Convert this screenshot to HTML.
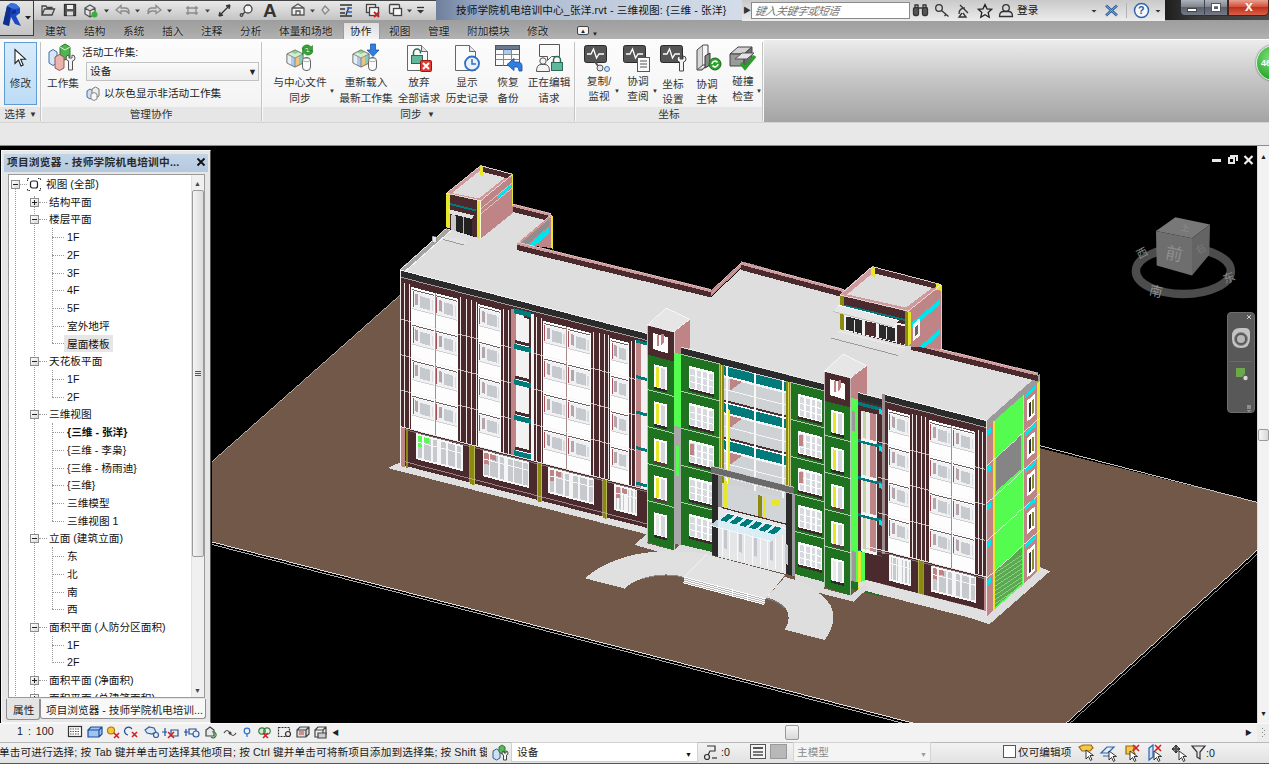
<!DOCTYPE html>
<html lang="zh">
<head>
<meta charset="utf-8">
<title>Revit</title>
<style>
*{box-sizing:border-box;margin:0;padding:0}
html,body{width:1269px;height:764px;overflow:hidden;background:#e6e6e6}
body{font-family:"Liberation Sans","Noto Sans CJK SC",sans-serif;font-size:10.67px;color:#1a1a1a;position:relative}
.abs{position:absolute}
.t{position:absolute;white-space:nowrap;line-height:14px;font-size:10.67px}
.c{text-align:center}
#titlebar{left:0;top:0;width:1269px;height:21px;background:linear-gradient(#e8e8e8,#d6d6d6 50%,#c2c2c2);border-top:1px solid #444}
#tabs{left:0;top:20px;width:1269px;height:19px;background:linear-gradient(#9e9e9e,#a6a6a6 50%,#b2b2b2)}
#ribbon{left:0;top:39px;width:764px;height:83px;background:linear-gradient(#fcfcfc,#f6f6f6 60%,#f0f0f0);border-top:1px solid #fff}
#ribbonR{left:764px;top:39px;width:505px;height:83px;background:linear-gradient(#ececec,#c4c4c4 50%,#a4a4a4);border-top:1px solid #fff}
#labels{left:0;top:106px;width:764px;height:16px;background:#e6e6e6;border-top:1px solid #f2f2f2}
#optbar{left:0;top:122px;width:1269px;height:24px;background:#e8e8e8;border-top:1px solid #d4d4d4;border-bottom:1px solid #8c8c8c}
.sep{position:absolute;top:42px;width:1px;height:79px;background:#c4c4c4;border-right:1px solid #fafafa;box-sizing:content-box}
.tab{position:absolute;top:24px;font-size:10.67px;line-height:14px;white-space:nowrap;color:#222;text-shadow:0 0 2px rgba(255,255,255,.55)}
.lbl{position:absolute;top:107px;font-size:10.67px;line-height:14px;white-space:nowrap;color:#333;text-align:center}
.btxt{position:absolute;font-size:10.67px;line-height:16px;white-space:nowrap;text-align:center;color:#333}
#view{left:0;top:146px;width:1257px;height:578px;background:#000;overflow:hidden}
#browser{left:1px;top:150px;width:210px;height:573px;background:#e6e6e6;border:1px solid #f6f6f6;border-right:1px solid #555}
#tree{left:8px;top:174px;width:197px;height:524px;background:#fff;border:1px solid #9a9a9a;overflow:hidden}
.row{position:absolute;white-space:nowrap;font-size:10.67px;line-height:14px;color:#111}
#vcb{left:0;top:723px;width:1269px;height:19px;background:#f0f0f0;border-top:1px solid #fafafa}
#status{left:0;top:742px;width:1269px;height:22px;background:linear-gradient(#f2f2f2,#e2e2e2);border-top:1px solid #b8b8b8;border-bottom:1px solid #555}
</style>
</head>
<body>
<div id="titlebar" class="abs"></div>
<!-- aero title region -->
<div class="abs" style="left:436px;top:0;width:306px;height:21px;background:linear-gradient(90deg,#6e7f9c 0%,#93a3bd 12%,#b4c1d5 40%,#c9d4e3 70%,#d3dce8 100%)"></div>
<div class="abs" style="left:1165px;top:0;width:104px;height:21px;background:linear-gradient(90deg,#1e1e1e,#3a3a3a 30%,#4a4a4a)"></div>
<div id="tabs" class="abs"></div>

<!-- App button -->
<div class="abs" style="left:0;top:0;width:34px;height:36px;background:linear-gradient(#e4e4e4,#c4c4c4);border-right:1px solid #3c3c3c;border-bottom:1px solid #3c3c3c;border-top:1px solid #333"></div>
<svg class="abs" style="left:0;top:0" width="34" height="36" viewBox="0 0 34 36">
 <path d="M7 6 L11 3 L16 4 L20 8 L20 13 L16 16 L21 26 L15 24 L11 17 L9 26 L3 24 Z" fill="#1b49c0"/>
 <path d="M7 6 L11 8 L9 26 L3 24 Z" fill="#0e2f8c"/>
 <path d="M11 3 L16 4 L20 8 L15 9 L11 8 L7 6 Z" fill="#3a6fe0"/>
 <path d="M12 10.500 L16 10 L16 13 L11.500 14.500 Z" fill="#0e2f8c"/>
 <path d="M25 16 l6 0 l-3 3.500z" fill="#222"/>
</svg>
<!-- QAT icons -->
<svg class="abs" style="left:38px;top:0" width="400" height="21" viewBox="38 0 400 21" fill="none" stroke="#444" stroke-width="1.3">
 <path d="M42 15 V6 h4 l1 1.5 h5 V9 M42 15 l2.5 -6 h10 l-2.5 6 z"/>
 <rect x="64.5" y="4.500" width="11" height="11" fill="#555" stroke="#333"/><rect x="67" y="5" width="6" height="4" fill="#eee" stroke="none"/><rect x="67" y="11.500" width="6" height="4" fill="#ddd" stroke="none"/>
 <path d="M85 8 l5 -3 l5 3 v6 l-5 3 l-5 -3 z M85 8 l5 3 l5 -3 M90 11 v6" stroke="#555" fill="#e4e4e4"/>
 <circle cx="94.500" cy="14.500" r="3" fill="#3cae3c" stroke="none"/>
 <path d="M104 9.500 l2.500 3 l2.500 -3z" fill="#333" stroke="none"/>
 <path d="M116 10 l5 -4.500 v2.500 h4 q4 0 4 4 v2 q-1 -3 -4 -3 h-4 v2.500 z" stroke="#8a8a8a"/>
 <path d="M135 9.500 l2.500 3 l2.500 -3z" fill="#444" stroke="none"/>
 <path d="M161 10 l-5 -4.500 v2.500 h-4 q-4 0 -4 4 v2 q1 -3 4 -3 h4 v2.500 z" stroke="#8a8a8a"/>
 <path d="M167 9.500 l2.500 3 l2.500 -3z" fill="#444" stroke="none"/>
 <path d="M186 8 h12 M186 13 h12 M188 6 v9 M196 6 v9" stroke="#8a8a8a"/>
 <path d="M205 9.500 l2.500 3 l2.500 -3z" fill="#444" stroke="none"/>
 <path d="M219 16 l11 -11 M219 16 l1 -4 M219 16 l4 -1 M230 5 l-4 1 M230 5 l-1 4" stroke="#333"/>
 <circle cx="248" cy="9" r="4" stroke="#444" fill="#f4f4f4"/><path d="M242 15 l3 -3" /><circle cx="241.500" cy="15" r="1.300"/>
 <path d="M576 0"/>
 <path d="M292 8 l6 -4 l6 4 v7 h-12 z M292 8 h12 M296 15 v-4 h4 v4" stroke="#555" fill="#f0f0f0"/>
 <path d="M310 9.500 l2.500 3 l2.500 -3z" fill="#444" stroke="none"/>
 <path d="M325 6 l4 4 l-4 4 l-3 -4z" stroke="#888" fill="#ddd"/>
 <path d="M340 5 h12 M340 9 h5 M340 13 h5 M340 16 h12 M349 7 l-3 8" stroke="#333"/><path d="M347 8 h5 M346 12 h6" stroke="#2a62c4"/>
 <rect x="366.500" y="4.500" width="9" height="8" stroke="#444" fill="#eee"/><rect x="369.500" y="7.500" width="9" height="8" stroke="#444" fill="#f4f4f4"/><path d="M374 12 l5 5 M379 12 l-5 5" stroke="#d02020" stroke-width="1.800"/>
 <rect x="389.500" y="4.500" width="10" height="9" rx="1" stroke="#444" fill="#eee"/><rect x="393.500" y="8.500" width="8" height="7" stroke="#444" fill="#fafafa"/>
 <path d="M407 9.500 l2.500 3 l2.500 -3z" fill="#444" stroke="none"/>
 <path d="M417 7.500 h7" stroke="#333"/><path d="M417 10 l3.500 3.500 l3.500 -3.500z" fill="#333" stroke="none"/>
</svg>
<div class="t" style="left:263px;top:0px;font-size:19px;line-height:21px;font-weight:bold;color:#333">A</div>
<!-- title text -->
<div class="t" style="left:456px;top:3px;font-size:10.67px;color:#111;letter-spacing:0.130px">技师学院机电培训中心_张洋.rvt - 三维视图: {三维 - 张洋}</div>
<!-- search box -->
<div class="abs" style="left:742px;top:0;width:423px;height:21px;background:linear-gradient(#c9c9c9,#dedede 60%,#ececec)"></div>
<div class="t" style="left:743px;top:4px;font-size:8px;color:#333">▶</div>
<div class="abs" style="left:751px;top:2px;width:159px;height:17px;background:#fff;border:1px solid #8a8a8a"></div>
<div class="t" style="left:755px;top:4px;font-size:11px;color:#777;font-style:italic;transform:skewX(-10deg);letter-spacing:-0.500px">键入关键字或短语</div>
<svg class="abs" style="left:910px;top:0" width="260" height="21" viewBox="910 0 260 21" fill="none" stroke="#333" stroke-width="1.300">
 <path d="M915 7 v-2 h3 v2 M923 7 v-2 h3 v2 M918 8 h5"/><rect x="913.500" y="7.500" width="5" height="8" rx="1.500" fill="#555"/><rect x="922.500" y="7.500" width="5" height="8" rx="1.500" fill="#555"/>
 <circle cx="939" cy="8" r="3.300"/><path d="M941.500 10.500 l7 6 M946 14.500 l-1.500 1.500"/>
 <path d="M960 5 l8 8 M959 14 q0 -6 6 -6 M962 13 l-3 4 h7 l-3 -4" />
 <path d="M985 4.500 l2 4.300 l4.700 0.500 l-3.500 3.200 l1 4.700 l-4.200 -2.400 l-4.200 2.400 l1 -4.700 l-3.500 -3.200 l4.700 -0.500 z" stroke="#222"/>
 <circle cx="1006" cy="8" r="3.300"/><path d="M999.500 16.500 q0 -5 4 -5 h5 q4 0 4 5 z"/>
 <path d="M1091.500 10 l2.500 2.500 l2.500 -2.500z" fill="#333" stroke="none"/>
 <path d="M1106 5.500 l11 10 M1117 5.500 l-11 10" stroke="#2d5d9a" stroke-width="2.600"/>
 <path d="M1106 5.500 l11 10 M1117 5.500 l-11 10" stroke="#9ebbe0" stroke-width="0.800"/>
 <circle cx="1141.500" cy="10.500" r="7" stroke="#3463ab" fill="#f4f7fc" stroke-width="1.500"/>
 <path d="M1155.500 10 l2.500 2.500 l2.500 -2.500z" fill="#333" stroke="none"/>
 <path d="M1126.500 3 v15" stroke="#b4b4b4" stroke-width="1"/>
</svg>
<div class="t" style="left:1017px;top:3px;font-size:10.67px;color:#111">登录</div>
<div class="t" style="left:1138px;top:3px;font-size:10.67px;font-weight:bold;color:#2b59a3">?</div>
<!-- window controls -->
<div class="abs" style="left:1180px;top:0;width:48px;height:16px;background:linear-gradient(#aeb2ba,#80858f 45%,#5c616b 50%,#747a86);border:1px solid #2c2f36;border-top:none;border-radius:0 0 0 5px"></div>
<div class="abs" style="left:1204px;top:0;width:1px;height:16px;background:#3b4557"></div>
<div class="abs" style="left:1228px;top:0;width:41px;height:16px;background:linear-gradient(#e8a090,#d4503c 45%,#c0301c 50%,#d86048);border:1px solid #4a2018;border-top:none;border-radius:0 0 5px 0"></div>
<div class="abs" style="left:1187px;top:8px;width:10px;height:4px;background:#fff;border:1px solid #444"></div>
<div class="abs" style="left:1212px;top:4px;width:8px;height:7px;border:2px solid #fff;outline:1px solid #555"></div>
<div class="t" style="left:1245px;top:-1px;font-size:14px;font-weight:bold;color:#fff;line-height:15px">x</div>

<!-- tabs -->
<div class="abs" style="left:343px;top:22px;width:37px;height:18px;background:linear-gradient(#dedede,#f4f4f4);border:1px solid #9c9c9c;border-bottom:none;border-radius:2px 2px 0 0"></div>
<div class="tab" style="left:45px">建筑</div>
<div class="tab" style="left:84px">结构</div>
<div class="tab" style="left:123px">系统</div>
<div class="tab" style="left:162px">插入</div>
<div class="tab" style="left:201px">注释</div>
<div class="tab" style="left:240px">分析</div>
<div class="tab" style="left:279px">体量和场地</div>
<div class="tab" style="left:350px">协作</div>
<div class="tab" style="left:389px">视图</div>
<div class="tab" style="left:428px">管理</div>
<div class="tab" style="left:467px">附加模块</div>
<div class="tab" style="left:527px">修改</div>
<div class="abs" style="left:577px;top:26px;width:12px;height:9px;border:1px solid #444;border-radius:2px;background:#f4f4f4"></div>
<div class="t" style="left:580px;top:24px;font-size:6px;color:#222">▲</div>
<div class="t" style="left:592px;top:27px;font-size:6px;color:#222">▼</div>

<div id="ribbon" class="abs"></div>
<div id="ribbonR" class="abs"></div>
<div id="labels" class="abs"></div>
<div id="optbar" class="abs"></div>
<div class="sep" style="left:40px"></div>
<div class="sep" style="left:261px"></div>
<div class="sep" style="left:574px"></div>
<div class="sep" style="left:762px"></div>

<!-- Modify button -->
<div class="abs" style="left:4px;top:42px;width:33px;height:63px;background:linear-gradient(#d9ebfb,#bcdcf6);border:1px solid #5e9bd2"></div>
<svg class="abs" style="left:12px;top:48px" width="16" height="20" viewBox="0 0 16 20"><path d="M3 1.500 v14 l3.500 -3.500 l2.500 6 l2.200 -1 l-2.500 -5.800 h4.800 z" fill="#fff" stroke="#222" stroke-width="1.100"/></svg>
<div class="btxt" style="left:4px;top:75px;width:33px">修改</div>
<div class="lbl" style="left:3px;width:24px">选择</div>
<div class="t" style="left:29px;top:108px;font-size:8px;color:#333">▼</div>

<!-- worksets panel -->
<svg class="abs" style="left:46px;top:42px" width="34" height="32" viewBox="0 0 34 32">
 <path d="M3 10 l4 -2.500 l4 2.500 v11 l-4 2.500 l-4 -2.500z" fill="#d6e6f6" stroke="#3a6ea8"/>
 <path d="M14 5 l5 -3 l5 3 v10 l-5 3 l-5 -3z" fill="#4fb54f" stroke="#2a7a2a"/><path d="M14 5 l5 3 l5 -3" fill="none" stroke="#d8f0d8"/>
 <path d="M9 15 l4.500 -2.500 l4.500 2.500 v11 l-4.500 2.500 l-4.500 -2.500z" fill="#e8b4b0" stroke="#a05050"/>
 <path d="M20 16 q0 -3 3 -3 v3 h3 v-3 q3 0 3 3 q0 2.500 -2.500 3 v9 h-4 v-9 q-2.500 -0.500 -2.500 -3z" fill="#f2f2f2" stroke="#555"/>
</svg>
<div class="btxt" style="left:44px;top:75px;width:38px">工作集</div>
<div class="t" style="left:82px;top:45px">活动工作集:</div>
<div class="abs" style="left:86px;top:62px;width:173px;height:19px;background:linear-gradient(#fafafa,#ececec);border:1px solid #c2c2c2"></div>
<div class="t" style="left:90px;top:64px">设备</div>
<div class="t" style="left:248px;top:65px;font-size:9px;color:#222">▼</div>
<svg class="abs" style="left:85px;top:85px" width="17" height="17" viewBox="0 0 17 17">
 <path d="M2 6 l3 -2 l3 2 v6 l-3 2 l-3 -2z" fill="#cfe0f2" stroke="#3f6fa6"/>
 <path d="M7 4 l3.500 -2 l3.500 2 v7 l-3.500 2 l-3.500 -2z" fill="#eee" stroke="#777"/>
 <path d="M6 9 l3 -1.500 l3 1.500 v5 l-3 1.500 l-3 -1.500z" fill="#f8f8f8" stroke="#888"/>
</svg>
<div class="t" style="left:104px;top:86px">以灰色显示非活动工作集</div>
<div class="lbl" style="left:101px;width:100px">管理协作</div>
<!-- sync panel -->
<svg class="abs" style="left:284px;top:42px" width="32" height="32" viewBox="0 0 32 32">
 <path d="M3 12 l8 -4 l8 4 v9 l-8 4 l-8 -4z" fill="#f4f4f4" stroke="#777" stroke-width="0.8"/>
 <path d="M3 12 l8 4 v9 l-8 -4z" fill="#a9cbee"/><path d="M3 12 l4 2 v9 l-4 -2z" fill="#e8eef6"/>
 <path d="M11 16 l8 -4 v9 l-8 4z" fill="#f0c27a"/><path d="M15 14 l4 -2 v9 l-4 2z" fill="#7ccfc0"/>
 <path d="M3 12 l8 -4 l8 4 l-8 4z" fill="#d4ecd0"/><path d="M7 10 l4 -2 l4 2 l-4 2z" fill="#8fd08a"/>
 <path d="M3 12 l8 -4 l8 4 v9 l-8 4 l-8 -4z M3 12 l8 4 l8 -4 M11 16 v9" fill="none" stroke="#6a6a6a" stroke-width="0.7"/>
 <rect x="18.500" y="15.500" width="8" height="13" rx="3.500" fill="#fafafa" stroke="#666"/><ellipse cx="22.500" cy="18" rx="3.800" ry="1.600" fill="#fff" stroke="#888" stroke-width="0.700"/>
 <path d="M18 7 a5 5 0 0 1 9 -2 l1.500 -1.500 v5 h-5 l1.500 -1.500 a3 3 0 0 0 -5 0.500z M29 9 a5 5 0 0 1 -9 2 l-1.500 1.500 v-5 h5 l-1.700 1.700 a3 3 0 0 0 5 -1z" fill="#34a834" stroke="#146a14" stroke-width="0.500"/>
</svg>
<div class="btxt" style="left:270px;top:74px;width:60px">与中心文件</div>
<div class="btxt" style="left:270px;top:90px;width:60px">同步</div>
<div class="t" style="left:329px;top:84px;font-size:6px;color:#333">▼</div>

<svg class="abs" style="left:350px;top:42px" width="32" height="32" viewBox="0 0 32 32">
 <path d="M3 12 l8 -4 l8 4 v9 l-8 4 l-8 -4z" fill="#f4f4f4" stroke="#777" stroke-width="0.8"/>
 <path d="M3 12 l8 4 v9 l-8 -4z" fill="#a9cbee"/><path d="M3 12 l4 2 v9 l-4 -2z" fill="#e8eef6"/>
 <path d="M11 16 l8 -4 v9 l-8 4z" fill="#f0c27a"/><path d="M15 14 l4 -2 v9 l-4 2z" fill="#7ccfc0"/>
 <path d="M3 12 l8 -4 l8 4 l-8 4z" fill="#d4ecd0"/><path d="M7 10 l4 -2 l4 2 l-4 2z" fill="#8fd08a"/>
 <path d="M3 12 l8 -4 l8 4 v9 l-8 4 l-8 -4z M3 12 l8 4 l8 -4 M11 16 v9" fill="none" stroke="#6a6a6a" stroke-width="0.7"/>
 <rect x="18.500" y="15.500" width="8" height="13" rx="3.500" fill="#fafafa" stroke="#666"/><ellipse cx="22.500" cy="18" rx="3.800" ry="1.600" fill="#fff" stroke="#888" stroke-width="0.700"/>
 <path d="M20.500 2 h5 v6 h3.500 l-6 6.500 l-6 -6.500 h3.500z" fill="#2f7fe0" stroke="#164a9a" stroke-width="0.700"/>
</svg>
<div class="btxt" style="left:336px;top:74px;width:60px">重新载入</div>
<div class="btxt" style="left:336px;top:90px;width:60px">最新工作集</div>

<svg class="abs" style="left:403px;top:42px" width="32" height="32" viewBox="0 0 32 32">
 <path d="M4.500 3.500 h14 l6 6 v19 h-20z" fill="#fbfbfb" stroke="#666"/><path d="M18.500 3.500 v6 h6" fill="#e4e4e4" stroke="#666"/>
 <rect x="8.500" y="13.500" width="11" height="8" fill="#5fb89c" stroke="#2c6a58"/><path d="M10.500 13.500 v-3 a3.500 3.500 0 0 1 7 0 v1" fill="none" stroke="#2c6a58" stroke-width="1.500"/>
 <rect x="17.500" y="18.500" width="11" height="11" rx="1" fill="#e23a30" stroke="#9a1812"/><path d="M20 21 l6 6 M26 21 l-6 6" stroke="#fff" stroke-width="2"/>
</svg>
<div class="btxt" style="left:389px;top:74px;width:60px">放弃</div>
<div class="btxt" style="left:389px;top:90px;width:60px">全部请求</div>

<svg class="abs" style="left:451px;top:42px" width="32" height="32" viewBox="0 0 32 32">
 <path d="M4.500 3.500 h14 l6 6 v19 h-20z" fill="#fbfbfb" stroke="#666"/><path d="M18.500 3.500 v6 h6" fill="#e4e4e4" stroke="#666"/>
 <circle cx="21" cy="21.500" r="7" fill="#e8f1fb" stroke="#2f6fc0" stroke-width="1.800"/><path d="M21 17 v5 h4" fill="none" stroke="#2f6fc0" stroke-width="1.500"/>
</svg>
<div class="btxt" style="left:437px;top:74px;width:60px">显示</div>
<div class="btxt" style="left:437px;top:90px;width:60px">历史记录</div>

<svg class="abs" style="left:493px;top:42px" width="32" height="32" viewBox="0 0 32 32">
 <rect x="2.500" y="3.500" width="24" height="20" fill="#fdfdfd" stroke="#555"/><rect x="2.500" y="3.500" width="24" height="4" fill="#6a7a8c" stroke="#555"/>
 <path d="M2.500 12.500 h24 M2.500 17.500 h24 M10.500 7.500 v16 M18.500 7.500 v16" stroke="#888" fill="none"/>
 <rect x="11" y="8" width="7" height="4" fill="#a9cdf0"/>
 <path d="M29 29 v-5 q0 -4 -5 -4 h-3 v-3.500 l-7 6 l7 6 v-3.500 h3 q2 0 2 4z" fill="#2f7fe0" stroke="#164a9a" stroke-width="0.800"/>
</svg>
<div class="btxt" style="left:478px;top:74px;width:60px">恢复</div>
<div class="btxt" style="left:478px;top:90px;width:60px">备份</div>

<svg class="abs" style="left:534px;top:42px" width="32" height="32" viewBox="0 0 32 32">
 <path d="M5.500 2.500 h20 v12 h-8 l-4 4 v-4 h-8z" fill="#fafafa" stroke="#555"/>
 <circle cx="9" cy="19" r="3.200" fill="#f4f4f4" stroke="#555"/><path d="M2.500 29.500 q0 -7 4.500 -7 h4 q4.500 0 4.500 7z" fill="#f4f4f4" stroke="#555"/>
 <rect x="17.500" y="20.500" width="11" height="8" fill="#5fb89c" stroke="#2c6a58"/><path d="M19.500 20.500 v-2.500 a3.500 3.500 0 0 1 7 0 v2.500" fill="none" stroke="#2c6a58" stroke-width="1.500"/>
</svg>
<div class="btxt" style="left:519px;top:74px;width:60px">正在编辑</div>
<div class="btxt" style="left:519px;top:90px;width:60px">请求</div>
<div class="lbl" style="left:391px;width:40px">同步</div>
<div class="t" style="left:427px;top:108px;font-size:8px;color:#333">▼</div>

<!-- coordinate panel -->
<svg class="abs" style="left:582px;top:42px" width="32" height="32" viewBox="0 0 32 32">
 <rect x="2.500" y="3.500" width="22" height="17" rx="2" fill="#555" stroke="#2a2a2a"/><path d="M5 12 h4 l2.500 -5 l3 9 l2.500 -4 h5" fill="none" stroke="#fff" stroke-width="1.300"/>
 <path d="M13 20 l4 5" stroke="#555" stroke-width="2"/><circle cx="18" cy="26" r="3" fill="#e8e8e8" stroke="#555"/><circle cx="25" cy="27" r="2.500" fill="#cfe4f8" stroke="#3a78c0"/>
</svg>
<div class="btxt" style="left:569px;top:73px;width:60px">复制/</div>
<div class="btxt" style="left:569px;top:88px;width:60px">监视</div>
<div class="t" style="left:614px;top:84px;font-size:6px;color:#333">▼</div>

<svg class="abs" style="left:621px;top:42px" width="32" height="32" viewBox="0 0 32 32">
 <rect x="2.500" y="3.500" width="22" height="17" rx="2" fill="#555" stroke="#2a2a2a"/><path d="M5 12 h4 l2.500 -5 l3 9 l2.500 -4 h5" fill="none" stroke="#fff" stroke-width="1.300"/>
 <rect x="16.500" y="15.500" width="12" height="14" fill="#fafafa" stroke="#555"/><path d="M19 19 h7 M19 22 h7 M19 25 h7" stroke="#555"/>
</svg>
<div class="btxt" style="left:608px;top:73px;width:60px">协调</div>
<div class="btxt" style="left:608px;top:88px;width:60px">查阅</div>
<div class="t" style="left:652px;top:84px;font-size:6px;color:#333">▼</div>

<svg class="abs" style="left:658px;top:42px" width="32" height="32" viewBox="0 0 32 32">
 <rect x="2.500" y="3.500" width="22" height="17" rx="2" fill="#555" stroke="#2a2a2a"/><path d="M5 12 h4 l2.500 -5 l3 9 l2.500 -4 h5" fill="none" stroke="#fff" stroke-width="1.300"/>
 <path d="M19 17 q0 -3 3 -3 v3 h3 v-3 q3 0 3 3 q0 2.500 -2.500 3 v9 h-4 v-9 q-2.500 -0.500 -2.500 -3z" fill="#f2f2f2" stroke="#444"/>
</svg>
<div class="btxt" style="left:643px;top:76px;width:60px">坐标</div>
<div class="btxt" style="left:643px;top:91px;width:60px">设置</div>

<svg class="abs" style="left:692px;top:42px" width="32" height="32" viewBox="0 0 32 32">
 <path d="M5 8 l6 -5 v20 l-6 5z" fill="#d8d8d8" stroke="#444"/><path d="M11 3 h5 v20 h-5" fill="#f4f4f4" stroke="#444"/><path d="M5 28 h5 l6 -5" fill="#bbb" stroke="#444"/>
 <path d="M13 14 l5 -3 v12 l-5 3z" fill="#888" stroke="#333"/>
 <circle cx="23" cy="22" r="6" fill="#2fa12f" stroke="#146a14"/><path d="M20 22 a3 3 0 0 1 5.500 -1.500 M26 22 a3 3 0 0 1 -5.500 1.500" stroke="#fff" fill="none" stroke-width="1.500"/>
</svg>
<div class="btxt" style="left:677px;top:76px;width:60px">协调</div>
<div class="btxt" style="left:677px;top:91px;width:60px">主体</div>

<svg class="abs" style="left:727px;top:42px" width="32" height="32" viewBox="0 0 32 32">
 <path d="M3 12 l8 -7 h14 l-8 7z" fill="#d4d4d4" stroke="#444"/><path d="M3 12 h14 v12 h-14z" fill="#9a9a9a" stroke="#444"/><path d="M17 12 l8 -7 v12 l-8 7z" fill="#6e6e6e" stroke="#444"/>
 <path d="M8 17 l7 -6 h12 l-7 6z" fill="#e4e4e4" stroke="#555"/>
 <path d="M14 21 l4 5 l10 -12" fill="none" stroke="#2aa02a" stroke-width="3.500"/>
</svg>
<div class="btxt" style="left:713px;top:73px;width:60px">碰撞</div>
<div class="btxt" style="left:713px;top:88px;width:60px">检查</div>
<div class="t" style="left:756px;top:84px;font-size:6px;color:#333">▼</div>
<div class="lbl" style="left:649px;width:40px">坐标</div>

<!-- green circle -->
<div class="abs" style="left:1256px;top:45px;width:36px;height:36px;border-radius:50%;background:radial-gradient(circle at 40% 35%,#7ee07e,#28a428 70%);border:1px solid #d8f4d8;box-shadow:0 0 2px #444"></div>
<div class="t" style="left:1261px;top:56px;font-size:9px;font-weight:bold;color:#fff">46</div>

<div id="view" class="abs">
<svg class="abs" style="left:0;top:0" width="1257" height="578" viewBox="0 146 1257 578" shape-rendering="crispEdges">
<polygon points="212.0,461.6 406.0,290.0 1257.0,502.3 1257.0,550.5 1065.2,724.0 916.7,724.0 212.0,542.0" fill="#715848"/>
<polyline points="212.0,542.0 916.7,724.0" fill="none" stroke="#f0f0f0" stroke-width="0.9"/>
<polyline points="212.0,544.5 906.0,724.0" fill="none" stroke="#d8d8d8" stroke-width="0.8"/>
<polyline points="1065.2,724.0 1257.0,550.5" fill="none" stroke="#e8e8e8" stroke-width="0.9"/>
<polyline points="1069.2,724.0 1257.0,554.5" fill="none" stroke="#cfcfcf" stroke-width="0.7"/>
<polyline points="1039.0,445.5 1257.0,502.3" fill="none" stroke="#f0f0f0" stroke-width="0.8"/>
<polyline points="212.0,461.6 400.0,295.2" fill="none" stroke="#e8e0d8" stroke-width="0.7"/>
<polygon points="973.0,618.7 989.3,624.4 1050.0,571.3 1040.0,567.0" fill="#dedede"/>
<polygon points="986.5,420.6 1039.6,373.6 1039.6,569.6 986.5,616.6" fill="#bf8486"/>
<polygon points="994.0,421.0 1022.5,395.7 1022.5,584.7 994.0,610.0" fill="#55fc50"/>
<polygon points="986.5,427.6 993.0,421.8 993.0,610.8 986.5,616.6" fill="#bf8486"/>
<polygon points="993.0,421.8 994.5,420.5 994.5,609.5 993.0,610.8" fill="#e6e62a"/>
<polygon points="1022.5,395.7 1024.4,394.1 1024.4,583.1 1022.5,584.7" fill="#e6e62a"/>
<polygon points="1024.4,394.1 1036.8,383.1 1036.8,572.1 1024.4,583.1" fill="#bf8486"/>
<polygon points="1036.8,376.1 1039.6,373.6 1039.6,569.6 1036.8,572.1" fill="#e6e62a"/>
<polygon points="996.0,457.2 1021.0,435.1 1021.0,469.1 996.0,491.2" fill="#858585"/>
<polygon points="995.0,571.1 1022.0,547.2 1022.0,583.2 995.0,607.1" fill="#5aa850"/>
<polyline points="995.0,573.1 1022.0,555.2" fill="none" stroke="#9ad890" stroke-width="0.8"/>
<polyline points="995.0,577.5 1022.0,559.6" fill="none" stroke="#9ad890" stroke-width="0.8"/>
<polyline points="995.0,581.9 1022.0,564.0" fill="none" stroke="#9ad890" stroke-width="0.8"/>
<polyline points="995.0,586.3 1022.0,568.4" fill="none" stroke="#9ad890" stroke-width="0.8"/>
<polyline points="995.0,590.7 1022.0,572.8" fill="none" stroke="#9ad890" stroke-width="0.8"/>
<polyline points="995.0,595.1 1022.0,577.2" fill="none" stroke="#9ad890" stroke-width="0.8"/>
<polyline points="995.0,599.5 1022.0,581.6" fill="none" stroke="#9ad890" stroke-width="0.8"/>
<polyline points="995.0,603.9 1022.0,586.0" fill="none" stroke="#9ad890" stroke-width="0.8"/>
<polygon points="987.0,430.2 991.0,426.6 991.0,432.6 987.0,436.2" fill="#00e4ee"/>
<polygon points="1025.0,394.5 1036.0,384.8 1036.0,388.8 1025.0,398.5" fill="#00e4ee"/>
<polygon points="1027.0,400.8 1035.0,393.7 1035.0,414.7 1027.0,421.8" fill="#fdfdfd"/>
<polygon points="1029.0,403.0 1031.0,401.2 1031.0,415.2 1029.0,417.0" fill="#333"/>
<polygon points="1032.0,400.3 1033.5,399.0 1033.5,413.0 1032.0,414.3" fill="#8a8a30"/>
<polyline points="986.5,465.1 1039.6,418.1" fill="none" stroke="#f4f4f4" stroke-width="0.8"/>
<polygon points="987.0,467.7 991.0,464.1 991.0,470.1 987.0,473.7" fill="#00e4ee"/>
<polygon points="1025.0,432.0 1036.0,422.3 1036.0,426.3 1025.0,436.0" fill="#00e4ee"/>
<polygon points="1027.0,438.3 1035.0,431.2 1035.0,452.2 1027.0,459.3" fill="#fdfdfd"/>
<polygon points="1029.0,440.5 1031.0,438.7 1031.0,452.7 1029.0,454.5" fill="#333"/>
<polygon points="1032.0,437.8 1033.5,436.5 1033.5,450.5 1032.0,451.8" fill="#8a8a30"/>
<polyline points="986.5,502.6 1039.6,455.6" fill="none" stroke="#f4f4f4" stroke-width="0.8"/>
<polygon points="987.0,505.2 991.0,501.6 991.0,507.6 987.0,511.2" fill="#00e4ee"/>
<polygon points="1025.0,469.5 1036.0,459.8 1036.0,463.8 1025.0,473.5" fill="#00e4ee"/>
<polygon points="1027.0,475.8 1035.0,468.7 1035.0,489.7 1027.0,496.8" fill="#fdfdfd"/>
<polygon points="1029.0,478.0 1031.0,476.2 1031.0,490.2 1029.0,492.0" fill="#333"/>
<polygon points="1032.0,475.3 1033.5,474.0 1033.5,488.0 1032.0,489.3" fill="#8a8a30"/>
<polyline points="986.5,540.1 1039.6,493.1" fill="none" stroke="#f4f4f4" stroke-width="0.8"/>
<polygon points="987.0,542.7 991.0,539.1 991.0,545.1 987.0,548.7" fill="#00e4ee"/>
<polygon points="1025.0,507.0 1036.0,497.3 1036.0,501.3 1025.0,511.0" fill="#00e4ee"/>
<polygon points="1027.0,513.3 1035.0,506.2 1035.0,527.2 1027.0,534.3" fill="#fdfdfd"/>
<polygon points="1029.0,515.5 1031.0,513.7 1031.0,527.7 1029.0,529.5" fill="#333"/>
<polygon points="1032.0,512.8 1033.5,511.5 1033.5,525.5 1032.0,526.8" fill="#8a8a30"/>
<polyline points="986.5,577.6 1039.6,530.6" fill="none" stroke="#f4f4f4" stroke-width="0.8"/>
<polygon points="987.0,580.2 991.0,576.6 991.0,582.6 987.0,586.2" fill="#00e4ee"/>
<polygon points="1025.0,544.5 1036.0,534.8 1036.0,538.8 1025.0,548.5" fill="#00e4ee"/>
<polygon points="1027.0,550.8 1035.0,543.7 1035.0,570.7 1027.0,577.8" fill="#fdfdfd"/>
<polygon points="1029.0,553.0 1031.0,551.2 1031.0,571.2 1029.0,573.0" fill="#333"/>
<polygon points="1032.0,550.3 1033.5,549.0 1033.5,569.0 1032.0,570.3" fill="#8a8a30"/>
<polygon points="986.5,420.6 1040.0,373.3 1040.0,380.3 986.5,427.6" fill="#9a9a9a"/>
<polyline points="986.5,420.6 986.5,616.0" fill="none" stroke="#f4f4f4" stroke-width="0.8"/>
<polygon points="400.0,270.0 446.4,228.3 480.6,238.7 512.0,211.0 550.8,221.0 516.6,249.5 711.0,297.0 740.5,269.4 843.9,297.0 872.2,272.6 941.4,290.0 941.4,349.0 1038.2,375.0 986.5,420.6 884.9,395.4 882.0,399.5 857.7,392.4 850.8,377.0 824.2,371.3 824.2,389.0 680.6,352.0 674.0,330.8 647.4,325.1 647.4,333.4" fill="#dedede"/>
<polygon points="399.0,270.0 446.4,228.3 450.5,231.0 404.0,272.3" fill="#a4a4a4"/>
<polyline points="404.0,272.3 450.5,231.0" fill="none" stroke="#f4f4f4" stroke-width="1"/>
<polyline points="400.0,270.0 446.4,228.3" fill="none" stroke="#fff" stroke-width="0.8"/>
<polygon points="512.8,205.5 550.8,215.0 550.8,221.5 512.8,212.0" fill="#4a2a2c"/>
<polygon points="512.8,203.9 550.8,213.4 550.8,216.2 512.8,206.7" fill="#cf9a9c"/>
<polyline points="512.8,203.9 550.8,213.4" fill="none" stroke="#f6e8e8" stroke-width="0.6"/>
<polygon points="550.8,215.0 550.8,248.0 528.0,245.0 520.0,240.0" fill="#bf8486"/>
<polygon points="550.8,215.0 552.5,216.0 552.5,249.0 550.8,248.0" fill="#e6e62a"/>
<polygon points="548.5,219.0 519.0,245.0 524.0,247.0 548.5,226.0" fill="#8e8e8e"/>
<polygon points="548.5,227.0 527.0,246.0 533.0,247.5 548.5,234.0" fill="#00e4ee"/>
<polygon points="550.8,215.0 516.6,243.5 516.6,247.0 550.8,218.5" fill="#bf8486"/>
<polyline points="550.8,215.0 516.6,243.5" fill="none" stroke="#f6e8e8" stroke-width="0.7"/>
<polyline points="550.8,216.8 516.6,245.2" fill="none" stroke="#e8c8c8" stroke-width="0.5"/>
<polygon points="516.6,243.5 711.0,291.0 711.0,297.5 516.6,250.0" fill="#4a2a2c"/>
<polygon points="516.6,241.9 711.0,289.4 711.0,292.2 516.6,244.7" fill="#cf9a9c"/>
<polyline points="516.6,241.9 711.0,289.4" fill="none" stroke="#f6e8e8" stroke-width="0.6"/>
<polygon points="711.0,291.0 740.5,263.4 740.5,268.4 711.0,296.0" fill="#bf8486"/>
<polyline points="711.0,291.0 740.5,263.4" fill="none" stroke="#f6e8e8" stroke-width="0.7"/>
<polyline points="711.0,293.5 740.5,265.9" fill="none" stroke="#e8c8c8" stroke-width="0.5"/>
<polygon points="740.5,263.4 843.9,291.0 843.9,297.5 740.5,269.9" fill="#4a2a2c"/>
<polygon points="740.5,261.8 843.9,289.4 843.9,292.2 740.5,264.6" fill="#cf9a9c"/>
<polyline points="740.5,261.8 843.9,289.4" fill="none" stroke="#f6e8e8" stroke-width="0.6"/>
<polygon points="843.9,291.0 872.2,266.6 872.2,271.6 843.9,296.0" fill="#bf8486"/>
<polyline points="843.9,291.0 872.2,266.6" fill="none" stroke="#f6e8e8" stroke-width="0.7"/>
<polyline points="843.9,293.5 872.2,269.1" fill="none" stroke="#e8c8c8" stroke-width="0.5"/>
<polygon points="911.0,343.4 1038.2,374.7 1038.2,381.2 911.0,349.9" fill="#4a2a2c"/>
<polygon points="911.0,341.8 1038.2,373.1 1038.2,375.9 911.0,344.6" fill="#cf9a9c"/>
<polyline points="911.0,341.8 1038.2,373.1" fill="none" stroke="#f6e8e8" stroke-width="0.6"/>
<polygon points="480.6,200.8 512.8,174.2 512.8,213.1 480.6,238.7" fill="#bf8486"/>
<polyline points="480.6,209.0 512.8,182.5" fill="none" stroke="#f0dada" stroke-width="0.7"/>
<polyline points="480.6,214.0 512.8,187.5" fill="none" stroke="#f0dada" stroke-width="0.7"/>
<polygon points="497.0,196.0 512.0,183.5 512.0,187.0 497.0,199.5" fill="#00e4ee"/>
<polygon points="446.4,193.2 480.6,200.8 480.6,238.7 446.4,227.4" fill="#4a2a2c"/>
<polygon points="446.4,193.2 449.5,194.0 449.5,228.4 446.4,227.4" fill="#e6e62a"/>
<polygon points="477.0,200.0 480.6,200.8 480.6,238.7 477.0,237.5" fill="#e6e62a"/>
<polygon points="450.0,203.0 476.0,209.5 476.0,211.5 450.0,205.0" fill="#007a7a"/>
<polygon points="448.0,209.0 474.0,215.5 471.0,219.5 450.0,214.0" fill="#e0e0e0"/>
<polygon points="455.5,215.0 471.5,219.0 471.5,235.5 455.5,231.0" fill="#222"/>
<polyline points="463.5,217.0 463.5,233.0" fill="none" stroke="#ddd" stroke-width="0.8"/>
<polygon points="451.0,214.5 455.5,215.6 455.5,231.0 451.0,229.8" fill="#c9c9c9"/>
<polygon points="446.4,193.2 480.6,165.7 512.8,174.2 480.6,200.8" fill="#cf9a9c"/>
<polygon points="452.0,193.0 481.5,169.5 507.0,176.0 479.0,198.5" fill="#dedede"/>
<polygon points="481.5,166.5 511.0,174.2 507.5,178.3 481.5,171.5" fill="#4a2a2c"/>
<polygon points="480.0,166.0 483.0,166.8 483.0,176.0 480.0,175.0" fill="#e6e62a"/>
<polyline points="446.4,193.2 480.6,165.7 512.8,174.2 480.6,200.8 446.4,193.2" fill="none" stroke="#f8ecec" stroke-width="0.8"/>
<polyline points="480.6,200.8 480.6,238.7" fill="none" stroke="#fff" stroke-width="0.8"/>
<polyline points="512.8,174.2 512.8,206.0" fill="none" stroke="#e6e62a" stroke-width="1.2"/>
<polygon points="447.0,236.0 468.0,241.5 464.0,245.0 443.0,239.5" fill="#e2e2e2"/>
<polyline points="443.0,239.5 464.0,245.0" fill="none" stroke="#8a8a8a" stroke-width="0.8"/>
<polygon points="432.0,236.0 436.0,237.0 436.0,243.0 432.0,242.0" fill="#e8e8e8" stroke="#888" stroke-width="0.6"/>
<polygon points="908.2,311.2 941.4,284.6 941.4,349.1 908.2,346.3" fill="#bf8486"/>
<polygon points="912.0,322.5 940.0,299.0 940.0,304.5 912.0,328.5" fill="#00e4ee"/>
<polygon points="919.0,347.0 940.0,329.0 940.0,334.0 925.0,347.5" fill="#00e4ee"/>
<polygon points="913.0,324.0 919.5,318.5 919.5,336.0 913.0,341.0" fill="#f4f4f4"/>
<polygon points="915.0,327.0 917.5,325.0 917.5,334.0 915.0,336.0" fill="#666"/>
<polygon points="839.9,295.0 908.2,311.2 908.2,346.3 839.9,329.2" fill="#4a2a2c"/>
<polygon points="839.9,295.0 843.5,295.9 843.5,330.2 839.9,329.2" fill="#8a8a10"/>
<polygon points="904.5,310.3 908.2,311.2 908.2,346.3 904.5,345.4" fill="#8a8a10"/>
<polygon points="908.2,311.2 911.0,311.9 911.0,343.5 908.2,346.3" fill="#e6e62a"/>
<polygon points="843.5,304.4 904.5,318.8 904.5,320.8 843.5,306.4" fill="#007a7a"/>
<polygon points="843.5,309.9 904.5,324.3 904.5,344.5 843.5,330.1" fill="#f2f2f2"/>
<polygon points="846.0,316.4 862.0,320.2 862.0,333.7 846.0,329.9" fill="#2a2a2a"/>
<polygon points="853.5,319.2 854.5,319.5 854.5,331.5 853.5,331.2" fill="#e8e8e8"/>
<polygon points="864.5,320.8 876.0,323.6 876.0,337.1 864.5,334.3" fill="#4a2a2c"/>
<polygon points="878.5,324.2 895.0,328.1 895.0,341.6 878.5,337.7" fill="#2a2a2a"/>
<polygon points="886.3,327.0 887.3,327.2 887.3,339.2 886.3,339.0" fill="#e8e8e8"/>
<polygon points="897.0,324.5 904.5,326.3 904.5,344.3 897.0,342.5" fill="#4a2a2c"/>
<polygon points="838.0,305.0 899.0,320.5 893.0,327.0 833.0,311.5" fill="#e6e6e6"/>
<polyline points="838.0,305.0 899.0,320.5" fill="none" stroke="#fafafa" stroke-width="1"/>
<polyline points="833.0,311.5 893.0,327.0" fill="none" stroke="#c0c0c0" stroke-width="1"/>
<polygon points="839.9,295.0 872.2,266.6 941.4,284.6 908.2,311.2" fill="#cf9a9c"/>
<polygon points="847.0,294.5 874.5,271.5 934.0,286.5 906.0,307.5" fill="#dedede"/>
<polygon points="874.5,267.5 938.5,284.2 934.5,288.3 874.5,273.5" fill="#4a2a2c"/>
<polygon points="871.0,267.0 875.0,268.0 875.0,277.0 871.0,276.0" fill="#e6e62a"/>
<polygon points="936.0,283.5 941.4,284.8 941.4,291.0 936.0,289.5" fill="#e6e62a"/>
<polyline points="839.9,295.0 872.2,266.6 941.4,284.6 908.2,311.2 839.9,295.0" fill="none" stroke="#f8ecec" stroke-width="0.8"/>
<polyline points="941.4,284.6 941.4,349.1" fill="none" stroke="#e6e62a" stroke-width="1.3"/>
<polygon points="838.0,331.0 905.0,348.0 898.0,355.5 831.0,338.0" fill="#e0e0e0"/>
<polyline points="831.0,338.0 898.0,355.5" fill="none" stroke="#8a8a8a" stroke-width="0.8"/>
<polyline points="838.0,331.0 905.0,348.0" fill="none" stroke="#f8f8f8" stroke-width="0.6"/>
<polygon points="400.0,270.0 647.4,333.5 647.4,529.5 400.0,466.0" fill="#4a2a2c"/>
<polygon points="400.0,270.0 647.4,333.5 647.4,340.5 400.0,277.0" fill="#2b2b2b"/>
<polyline points="400.0,270.0 647.4,333.5" fill="none" stroke="#fff" stroke-width="0.9"/>
<polyline points="400.0,277.0 647.4,340.5" fill="none" stroke="#e8e8e8" stroke-width="0.6"/>
<polygon points="387.6,468.0 400.0,462.5 400.0,464.5 647.4,528.0 647.4,534.5 409.0,473.5" fill="#e0e0e0"/>
<polygon points="411.3,286.9 457.8,298.8 457.8,441.3 411.3,429.4" fill="#fdfdfd"/>
<polygon points="412.5,290.7 434.0,296.2 434.0,313.7 412.5,308.2" fill="#f0f1f3"/>
<polygon points="412.5,291.2 413.7,291.5 413.7,307.5 412.5,307.2" fill="#a85058"/>
<polygon points="415.3,293.9 418.4,294.7 418.4,305.7 415.3,304.9" fill="#b4a4ac"/>
<polygon points="420.4,296.2 430.3,298.8 430.3,310.3 420.4,307.7" fill="#c6cace"/>
<polygon points="431.8,300.2 433.0,300.5 433.0,311.0 431.8,310.7" fill="#d8dade"/>
<polyline points="412.3,308.7 434.0,314.2" fill="none" stroke="#c4c4c4" stroke-width="0.8"/>
<polyline points="412.3,289.7 434.0,295.2" fill="none" stroke="#4a3a3a" stroke-width="0.8"/>
<polygon points="436.2,296.8 456.8,302.1 456.8,319.6 436.2,314.3" fill="#f0f1f3"/>
<polygon points="436.2,297.3 437.4,297.6 437.4,313.6 436.2,313.3" fill="#a85058"/>
<polygon points="439.0,300.0 442.0,300.8 442.0,311.8 439.0,311.0" fill="#b4a4ac"/>
<polygon points="444.0,302.3 453.2,304.7 453.2,316.2 444.0,313.8" fill="#c6cace"/>
<polygon points="454.7,306.1 455.8,306.3 455.8,316.8 454.7,316.6" fill="#d8dade"/>
<polyline points="436.0,314.7 456.8,320.1" fill="none" stroke="#c4c4c4" stroke-width="0.8"/>
<polyline points="436.0,295.7 456.8,301.1" fill="none" stroke="#4a3a3a" stroke-width="0.8"/>
<polygon points="412.5,326.2 434.0,331.7 434.0,349.2 412.5,343.7" fill="#f0f1f3"/>
<polygon points="412.5,326.7 413.7,327.0 413.7,343.0 412.5,342.7" fill="#a85058"/>
<polygon points="415.3,329.4 418.4,330.2 418.4,341.2 415.3,340.4" fill="#b4a4ac"/>
<polygon points="420.4,331.7 430.3,334.3 430.3,345.8 420.4,343.2" fill="#c6cace"/>
<polygon points="431.8,335.7 433.0,336.0 433.0,346.5 431.8,346.2" fill="#d8dade"/>
<polyline points="412.3,344.2 434.0,349.7" fill="none" stroke="#c4c4c4" stroke-width="0.8"/>
<polyline points="412.3,325.2 434.0,330.7" fill="none" stroke="#4a3a3a" stroke-width="0.8"/>
<polygon points="436.2,332.3 456.8,337.6 456.8,355.1 436.2,349.8" fill="#f0f1f3"/>
<polygon points="436.2,332.8 437.4,333.1 437.4,349.1 436.2,348.8" fill="#a85058"/>
<polygon points="439.0,335.5 442.0,336.3 442.0,347.3 439.0,346.5" fill="#b4a4ac"/>
<polygon points="444.0,337.8 453.2,340.2 453.2,351.7 444.0,349.3" fill="#c6cace"/>
<polygon points="454.7,341.6 455.8,341.8 455.8,352.3 454.7,352.1" fill="#d8dade"/>
<polyline points="436.0,350.2 456.8,355.6" fill="none" stroke="#c4c4c4" stroke-width="0.8"/>
<polyline points="436.0,331.2 456.8,336.6" fill="none" stroke="#4a3a3a" stroke-width="0.8"/>
<polygon points="412.5,361.7 434.0,367.2 434.0,384.7 412.5,379.2" fill="#f0f1f3"/>
<polygon points="412.5,362.2 413.7,362.5 413.7,378.5 412.5,378.2" fill="#a85058"/>
<polygon points="415.3,364.9 418.4,365.7 418.4,376.7 415.3,375.9" fill="#b4a4ac"/>
<polygon points="420.4,367.2 430.3,369.8 430.3,381.3 420.4,378.7" fill="#c6cace"/>
<polygon points="431.8,371.2 433.0,371.5 433.0,382.0 431.8,381.7" fill="#d8dade"/>
<polyline points="412.3,379.7 434.0,385.2" fill="none" stroke="#c4c4c4" stroke-width="0.8"/>
<polyline points="412.3,360.7 434.0,366.2" fill="none" stroke="#4a3a3a" stroke-width="0.8"/>
<polygon points="436.2,367.8 456.8,373.1 456.8,390.6 436.2,385.3" fill="#f0f1f3"/>
<polygon points="436.2,368.3 437.4,368.6 437.4,384.6 436.2,384.3" fill="#a85058"/>
<polygon points="439.0,371.0 442.0,371.8 442.0,382.8 439.0,382.0" fill="#b4a4ac"/>
<polygon points="444.0,373.3 453.2,375.7 453.2,387.2 444.0,384.8" fill="#c6cace"/>
<polygon points="454.7,377.1 455.8,377.3 455.8,387.8 454.7,387.6" fill="#d8dade"/>
<polyline points="436.0,385.7 456.8,391.1" fill="none" stroke="#c4c4c4" stroke-width="0.8"/>
<polyline points="436.0,366.7 456.8,372.1" fill="none" stroke="#4a3a3a" stroke-width="0.8"/>
<polygon points="412.5,397.2 434.0,402.7 434.0,420.2 412.5,414.7" fill="#f0f1f3"/>
<polygon points="412.5,397.7 413.7,398.0 413.7,414.0 412.5,413.7" fill="#a85058"/>
<polygon points="415.3,400.4 418.4,401.2 418.4,412.2 415.3,411.4" fill="#b4a4ac"/>
<polygon points="420.4,402.7 430.3,405.3 430.3,416.8 420.4,414.2" fill="#c6cace"/>
<polygon points="431.8,406.7 433.0,407.0 433.0,417.5 431.8,417.2" fill="#d8dade"/>
<polyline points="412.3,415.2 434.0,420.7" fill="none" stroke="#c4c4c4" stroke-width="0.8"/>
<polyline points="412.3,396.2 434.0,401.7" fill="none" stroke="#4a3a3a" stroke-width="0.8"/>
<polygon points="436.2,403.3 456.8,408.6 456.8,426.1 436.2,420.8" fill="#f0f1f3"/>
<polygon points="436.2,403.8 437.4,404.1 437.4,420.1 436.2,419.8" fill="#a85058"/>
<polygon points="439.0,406.5 442.0,407.3 442.0,418.3 439.0,417.5" fill="#b4a4ac"/>
<polygon points="444.0,408.8 453.2,411.2 453.2,422.7 444.0,420.3" fill="#c6cace"/>
<polygon points="454.7,412.6 455.8,412.8 455.8,423.3 454.7,423.1" fill="#d8dade"/>
<polyline points="436.0,421.2 456.8,426.6" fill="none" stroke="#c4c4c4" stroke-width="0.8"/>
<polyline points="436.0,402.2 456.8,407.6" fill="none" stroke="#4a3a3a" stroke-width="0.8"/>
<polyline points="435.0,293.0 435.0,435.0" fill="none" stroke="#a08082" stroke-width="0.9"/>
<polyline points="401.3,319.3 467.8,336.4" fill="none" stroke="#f4eeee" stroke-width="0.7"/>
<polyline points="401.3,354.8 467.8,371.9" fill="none" stroke="#f4eeee" stroke-width="0.7"/>
<polyline points="401.3,390.3 467.8,407.4" fill="none" stroke="#f4eeee" stroke-width="0.7"/>
<polygon points="477.7,304.0 501.4,310.0 501.4,452.5 477.7,446.5" fill="#fdfdfd"/>
<polygon points="478.9,307.8 500.4,313.3 500.4,330.8 478.9,325.3" fill="#f0f1f3"/>
<polygon points="478.9,308.3 480.1,308.6 480.1,324.6 478.9,324.3" fill="#a85058"/>
<polygon points="481.7,311.0 484.8,311.8 484.8,322.8 481.7,322.0" fill="#b4a4ac"/>
<polygon points="486.8,313.3 496.7,315.8 496.7,327.3 486.8,324.8" fill="#c6cace"/>
<polygon points="498.2,317.2 499.4,317.5 499.4,328.0 498.2,327.7" fill="#d8dade"/>
<polyline points="478.7,325.7 500.4,331.3" fill="none" stroke="#c4c4c4" stroke-width="0.8"/>
<polyline points="478.7,306.7 500.4,312.3" fill="none" stroke="#4a3a3a" stroke-width="0.8"/>
<polygon points="478.9,343.3 500.4,348.8 500.4,366.3 478.9,360.8" fill="#f0f1f3"/>
<polygon points="478.9,343.8 480.1,344.1 480.1,360.1 478.9,359.8" fill="#a85058"/>
<polygon points="481.7,346.5 484.8,347.3 484.8,358.3 481.7,357.5" fill="#b4a4ac"/>
<polygon points="486.8,348.8 496.7,351.3 496.7,362.8 486.8,360.3" fill="#c6cace"/>
<polygon points="498.2,352.7 499.4,353.0 499.4,363.5 498.2,363.2" fill="#d8dade"/>
<polyline points="478.7,361.2 500.4,366.8" fill="none" stroke="#c4c4c4" stroke-width="0.8"/>
<polyline points="478.7,342.2 500.4,347.8" fill="none" stroke="#4a3a3a" stroke-width="0.8"/>
<polygon points="478.9,378.8 500.4,384.3 500.4,401.8 478.9,396.3" fill="#f0f1f3"/>
<polygon points="478.9,379.3 480.1,379.6 480.1,395.6 478.9,395.3" fill="#a85058"/>
<polygon points="481.7,382.0 484.8,382.8 484.8,393.8 481.7,393.0" fill="#b4a4ac"/>
<polygon points="486.8,384.3 496.7,386.8 496.7,398.3 486.8,395.8" fill="#c6cace"/>
<polygon points="498.2,388.2 499.4,388.5 499.4,399.0 498.2,398.7" fill="#d8dade"/>
<polyline points="478.7,396.7 500.4,402.3" fill="none" stroke="#c4c4c4" stroke-width="0.8"/>
<polyline points="478.7,377.7 500.4,383.3" fill="none" stroke="#4a3a3a" stroke-width="0.8"/>
<polygon points="478.9,414.3 500.4,419.8 500.4,437.3 478.9,431.8" fill="#f0f1f3"/>
<polygon points="478.9,414.8 480.1,415.1 480.1,431.1 478.9,430.8" fill="#a85058"/>
<polygon points="481.7,417.5 484.8,418.3 484.8,429.3 481.7,428.5" fill="#b4a4ac"/>
<polygon points="486.8,419.8 496.7,422.3 496.7,433.8 486.8,431.3" fill="#c6cace"/>
<polygon points="498.2,423.7 499.4,424.0 499.4,434.5 498.2,434.2" fill="#d8dade"/>
<polyline points="478.7,432.2 500.4,437.8" fill="none" stroke="#c4c4c4" stroke-width="0.8"/>
<polyline points="478.7,413.2 500.4,418.8" fill="none" stroke="#4a3a3a" stroke-width="0.8"/>
<polyline points="467.7,336.4 511.4,347.6" fill="none" stroke="#f4eeee" stroke-width="0.7"/>
<polyline points="467.7,371.9 511.4,383.1" fill="none" stroke="#f4eeee" stroke-width="0.7"/>
<polyline points="467.7,407.4 511.4,418.6" fill="none" stroke="#f4eeee" stroke-width="0.7"/>
<polygon points="543.0,320.7 590.6,332.9 590.6,475.4 543.0,463.2" fill="#fdfdfd"/>
<polygon points="544.2,324.5 565.5,330.0 565.5,347.5 544.2,342.0" fill="#f0f1f3"/>
<polygon points="544.2,325.0 545.4,325.3 545.4,341.3 544.2,341.0" fill="#a85058"/>
<polygon points="547.0,327.7 550.1,328.5 550.1,339.5 547.0,338.7" fill="#b4a4ac"/>
<polygon points="552.1,330.0 561.8,332.6 561.8,344.1 552.1,341.5" fill="#c6cace"/>
<polygon points="563.3,333.9 564.5,334.2 564.5,344.7 563.3,344.4" fill="#d8dade"/>
<polyline points="544.0,342.5 565.5,348.0" fill="none" stroke="#c4c4c4" stroke-width="0.8"/>
<polyline points="544.0,323.5 565.5,329.0" fill="none" stroke="#4a3a3a" stroke-width="0.8"/>
<polygon points="567.7,330.6 589.6,336.2 589.6,353.7 567.7,348.1" fill="#f0f1f3"/>
<polygon points="567.7,331.1 568.9,331.4 568.9,347.4 567.7,347.1" fill="#a85058"/>
<polygon points="570.5,333.8 573.6,334.6 573.6,345.6 570.5,344.8" fill="#b4a4ac"/>
<polygon points="575.6,336.1 585.8,338.7 585.8,350.2 575.6,347.6" fill="#c6cace"/>
<polygon points="587.3,340.1 588.6,340.4 588.6,350.9 587.3,350.6" fill="#d8dade"/>
<polyline points="567.5,348.5 589.6,354.2" fill="none" stroke="#c4c4c4" stroke-width="0.8"/>
<polyline points="567.5,329.5 589.6,335.2" fill="none" stroke="#4a3a3a" stroke-width="0.8"/>
<polygon points="544.2,360.0 565.5,365.5 565.5,383.0 544.2,377.5" fill="#f0f1f3"/>
<polygon points="544.2,360.5 545.4,360.8 545.4,376.8 544.2,376.5" fill="#a85058"/>
<polygon points="547.0,363.2 550.1,364.0 550.1,375.0 547.0,374.2" fill="#b4a4ac"/>
<polygon points="552.1,365.5 561.8,368.1 561.8,379.6 552.1,377.0" fill="#c6cace"/>
<polygon points="563.3,369.4 564.5,369.7 564.5,380.2 563.3,379.9" fill="#d8dade"/>
<polyline points="544.0,378.0 565.5,383.5" fill="none" stroke="#c4c4c4" stroke-width="0.8"/>
<polyline points="544.0,359.0 565.5,364.5" fill="none" stroke="#4a3a3a" stroke-width="0.8"/>
<polygon points="567.7,366.1 589.6,371.7 589.6,389.2 567.7,383.6" fill="#f0f1f3"/>
<polygon points="567.7,366.6 568.9,366.9 568.9,382.9 567.7,382.6" fill="#a85058"/>
<polygon points="570.5,369.3 573.6,370.1 573.6,381.1 570.5,380.3" fill="#b4a4ac"/>
<polygon points="575.6,371.6 585.8,374.2 585.8,385.7 575.6,383.1" fill="#c6cace"/>
<polygon points="587.3,375.6 588.6,375.9 588.6,386.4 587.3,386.1" fill="#d8dade"/>
<polyline points="567.5,384.0 589.6,389.7" fill="none" stroke="#c4c4c4" stroke-width="0.8"/>
<polyline points="567.5,365.0 589.6,370.7" fill="none" stroke="#4a3a3a" stroke-width="0.8"/>
<polygon points="544.2,395.5 565.5,401.0 565.5,418.5 544.2,413.0" fill="#f0f1f3"/>
<polygon points="544.2,396.0 545.4,396.3 545.4,412.3 544.2,412.0" fill="#a85058"/>
<polygon points="547.0,398.7 550.1,399.5 550.1,410.5 547.0,409.7" fill="#b4a4ac"/>
<polygon points="552.1,401.0 561.8,403.6 561.8,415.1 552.1,412.5" fill="#c6cace"/>
<polygon points="563.3,404.9 564.5,405.2 564.5,415.7 563.3,415.4" fill="#d8dade"/>
<polyline points="544.0,413.5 565.5,419.0" fill="none" stroke="#c4c4c4" stroke-width="0.8"/>
<polyline points="544.0,394.5 565.5,400.0" fill="none" stroke="#4a3a3a" stroke-width="0.8"/>
<polygon points="567.7,401.6 589.6,407.2 589.6,424.7 567.7,419.1" fill="#f0f1f3"/>
<polygon points="567.7,402.1 568.9,402.4 568.9,418.4 567.7,418.1" fill="#a85058"/>
<polygon points="570.5,404.8 573.6,405.6 573.6,416.6 570.5,415.8" fill="#b4a4ac"/>
<polygon points="575.6,407.1 585.8,409.7 585.8,421.2 575.6,418.6" fill="#c6cace"/>
<polygon points="587.3,411.1 588.6,411.4 588.6,421.9 587.3,421.6" fill="#d8dade"/>
<polyline points="567.5,419.5 589.6,425.2" fill="none" stroke="#c4c4c4" stroke-width="0.8"/>
<polyline points="567.5,400.5 589.6,406.2" fill="none" stroke="#4a3a3a" stroke-width="0.8"/>
<polygon points="544.2,431.0 565.5,436.5 565.5,454.0 544.2,448.5" fill="#f0f1f3"/>
<polygon points="544.2,431.5 545.4,431.8 545.4,447.8 544.2,447.5" fill="#a85058"/>
<polygon points="547.0,434.2 550.1,435.0 550.1,446.0 547.0,445.2" fill="#b4a4ac"/>
<polygon points="552.1,436.5 561.8,439.1 561.8,450.6 552.1,448.0" fill="#c6cace"/>
<polygon points="563.3,440.4 564.5,440.7 564.5,451.2 563.3,450.9" fill="#d8dade"/>
<polyline points="544.0,449.0 565.5,454.5" fill="none" stroke="#c4c4c4" stroke-width="0.8"/>
<polyline points="544.0,430.0 565.5,435.5" fill="none" stroke="#4a3a3a" stroke-width="0.8"/>
<polygon points="567.7,437.1 589.6,442.7 589.6,460.2 567.7,454.6" fill="#f0f1f3"/>
<polygon points="567.7,437.6 568.9,437.9 568.9,453.9 567.7,453.6" fill="#a85058"/>
<polygon points="570.5,440.3 573.6,441.1 573.6,452.1 570.5,451.3" fill="#b4a4ac"/>
<polygon points="575.6,442.6 585.8,445.2 585.8,456.7 575.6,454.1" fill="#c6cace"/>
<polygon points="587.3,446.6 588.6,446.9 588.6,457.4 587.3,457.1" fill="#d8dade"/>
<polyline points="567.5,455.0 589.6,460.7" fill="none" stroke="#c4c4c4" stroke-width="0.8"/>
<polyline points="567.5,436.0 589.6,441.7" fill="none" stroke="#4a3a3a" stroke-width="0.8"/>
<polyline points="566.5,326.8 566.5,468.8" fill="none" stroke="#a08082" stroke-width="0.9"/>
<polyline points="533.0,353.2 600.6,370.5" fill="none" stroke="#f4eeee" stroke-width="0.7"/>
<polyline points="533.0,388.7 600.6,406.0" fill="none" stroke="#f4eeee" stroke-width="0.7"/>
<polyline points="533.0,424.2 600.6,441.5" fill="none" stroke="#f4eeee" stroke-width="0.7"/>
<polygon points="610.4,338.0 629.4,342.9 629.4,485.4 610.4,480.5" fill="#fdfdfd"/>
<polygon points="611.6,341.8 628.4,346.2 628.4,363.7 611.6,359.3" fill="#f0f1f3"/>
<polygon points="611.6,342.3 612.8,342.6 612.8,358.6 611.6,358.3" fill="#a85058"/>
<polygon points="614.4,345.1 616.9,345.7 616.9,356.7 614.4,356.1" fill="#b4a4ac"/>
<polygon points="618.9,347.2 625.6,348.9 625.6,360.4 618.9,358.7" fill="#c6cace"/>
<polygon points="627.1,350.3 627.4,350.4 627.4,360.9 627.1,360.8" fill="#d8dade"/>
<polyline points="611.4,359.8 628.4,364.2" fill="none" stroke="#c4c4c4" stroke-width="0.8"/>
<polyline points="611.4,340.8 628.4,345.2" fill="none" stroke="#4a3a3a" stroke-width="0.8"/>
<polygon points="611.6,377.3 628.4,381.7 628.4,399.2 611.6,394.8" fill="#f0f1f3"/>
<polygon points="611.6,377.8 612.8,378.1 612.8,394.1 611.6,393.8" fill="#a85058"/>
<polygon points="614.4,380.6 616.9,381.2 616.9,392.2 614.4,391.6" fill="#b4a4ac"/>
<polygon points="618.9,382.7 625.6,384.4 625.6,395.9 618.9,394.2" fill="#c6cace"/>
<polygon points="627.1,385.8 627.4,385.9 627.4,396.4 627.1,396.3" fill="#d8dade"/>
<polyline points="611.4,395.3 628.4,399.7" fill="none" stroke="#c4c4c4" stroke-width="0.8"/>
<polyline points="611.4,376.3 628.4,380.7" fill="none" stroke="#4a3a3a" stroke-width="0.8"/>
<polygon points="611.6,412.8 628.4,417.2 628.4,434.7 611.6,430.3" fill="#f0f1f3"/>
<polygon points="611.6,413.3 612.8,413.6 612.8,429.6 611.6,429.3" fill="#a85058"/>
<polygon points="614.4,416.1 616.9,416.7 616.9,427.7 614.4,427.1" fill="#b4a4ac"/>
<polygon points="618.9,418.2 625.6,419.9 625.6,431.4 618.9,429.7" fill="#c6cace"/>
<polygon points="627.1,421.3 627.4,421.4 627.4,431.9 627.1,431.8" fill="#d8dade"/>
<polyline points="611.4,430.8 628.4,435.2" fill="none" stroke="#c4c4c4" stroke-width="0.8"/>
<polyline points="611.4,411.8 628.4,416.2" fill="none" stroke="#4a3a3a" stroke-width="0.8"/>
<polygon points="611.6,448.3 628.4,452.7 628.4,470.2 611.6,465.8" fill="#f0f1f3"/>
<polygon points="611.6,448.8 612.8,449.1 612.8,465.1 611.6,464.8" fill="#a85058"/>
<polygon points="614.4,451.6 616.9,452.2 616.9,463.2 614.4,462.6" fill="#b4a4ac"/>
<polygon points="618.9,453.7 625.6,455.4 625.6,466.9 618.9,465.2" fill="#c6cace"/>
<polygon points="627.1,456.8 627.4,456.9 627.4,467.4 627.1,467.3" fill="#d8dade"/>
<polyline points="611.4,466.3 628.4,470.7" fill="none" stroke="#c4c4c4" stroke-width="0.8"/>
<polyline points="611.4,447.3 628.4,451.7" fill="none" stroke="#4a3a3a" stroke-width="0.8"/>
<polyline points="600.4,370.5 639.4,380.5" fill="none" stroke="#f4eeee" stroke-width="0.7"/>
<polyline points="600.4,406.0 639.4,416.0" fill="none" stroke="#f4eeee" stroke-width="0.7"/>
<polyline points="600.4,441.5 639.4,451.5" fill="none" stroke="#f4eeee" stroke-width="0.7"/>
<polyline points="404.0,283.0 404.0,427.0" fill="none" stroke="#f2eaea" stroke-width="1"/>
<polyline points="409.0,284.3 409.0,428.3" fill="none" stroke="#f2eaea" stroke-width="1"/>
<polyline points="460.0,297.4 460.0,441.4" fill="none" stroke="#f2eaea" stroke-width="1"/>
<polyline points="466.0,298.9 466.0,442.9" fill="none" stroke="#f2eaea" stroke-width="1"/>
<polyline points="471.5,300.4 471.5,444.4" fill="none" stroke="#f2eaea" stroke-width="1"/>
<polyline points="476.0,301.5 476.0,445.5" fill="none" stroke="#f2eaea" stroke-width="1"/>
<polyline points="503.5,308.6 503.5,452.6" fill="none" stroke="#f2eaea" stroke-width="1"/>
<polyline points="508.0,309.7 508.0,453.7" fill="none" stroke="#f2eaea" stroke-width="1"/>
<polyline points="536.5,317.1 536.5,461.1" fill="none" stroke="#f2eaea" stroke-width="1"/>
<polyline points="541.0,318.2 541.0,462.2" fill="none" stroke="#f2eaea" stroke-width="1"/>
<polyline points="593.0,331.6 593.0,475.6" fill="none" stroke="#f2eaea" stroke-width="1"/>
<polyline points="599.0,333.1 599.0,477.1" fill="none" stroke="#f2eaea" stroke-width="1"/>
<polyline points="604.0,334.4 604.0,478.4" fill="none" stroke="#f2eaea" stroke-width="1"/>
<polyline points="608.0,335.4 608.0,479.4" fill="none" stroke="#f2eaea" stroke-width="1"/>
<polyline points="631.5,341.4 631.5,485.4" fill="none" stroke="#f2eaea" stroke-width="1"/>
<polygon points="511.0,308.5 533.7,314.3 533.7,460.3 511.0,454.5" fill="#f4f4f4"/>
<polygon points="511.0,308.5 515.5,309.7 515.5,455.7 511.0,454.5" fill="#bf8486"/>
<polygon points="524.0,315.8 531.0,317.6 531.0,453.6 524.0,451.8" fill="#4a2a2c"/>
<polygon points="519.0,316.6 529.0,319.1 529.0,453.1 519.0,450.6" fill="#f2f2f2"/>
<polygon points="513.5,308.1 531.0,312.6 531.0,317.6 513.5,313.1" fill="#007a7a"/>
<polygon points="513.5,343.6 531.0,348.1 531.0,353.1 513.5,348.6" fill="#007a7a"/>
<polygon points="515.0,340.0 531.0,344.1 531.0,347.1 515.0,343.0" fill="#4a2a2c"/>
<polygon points="513.5,379.1 531.0,383.6 531.0,388.6 513.5,384.1" fill="#007a7a"/>
<polygon points="515.0,375.5 531.0,379.6 531.0,382.6 515.0,378.5" fill="#4a2a2c"/>
<polygon points="513.5,414.6 531.0,419.1 531.0,424.1 513.5,419.6" fill="#007a7a"/>
<polygon points="515.0,411.0 531.0,415.1 531.0,418.1 515.0,414.0" fill="#4a2a2c"/>
<polygon points="513.5,450.1 531.0,454.6 531.0,459.6 513.5,455.1" fill="#007a7a"/>
<polygon points="515.0,446.5 531.0,450.6 531.0,453.6 515.0,449.5" fill="#4a2a2c"/>
<polygon points="635.0,340.3 647.4,343.5 647.4,489.5 635.0,486.3" fill="#f2f2f2"/>
<polygon points="636.0,340.6 641.0,341.9 641.0,487.9 636.0,486.6" fill="#bf8486"/>
<polygon points="636.0,339.6 647.4,342.5 647.4,345.5 636.0,342.6" fill="#007a7a"/>
<polygon points="636.0,375.1 647.4,378.0 647.4,381.0 636.0,378.1" fill="#007a7a"/>
<polygon points="636.0,410.6 647.4,413.5 647.4,416.5 636.0,413.6" fill="#007a7a"/>
<polygon points="636.0,446.1 647.4,449.0 647.4,452.0 636.0,449.1" fill="#007a7a"/>
<polygon points="636.0,481.6 647.4,484.5 647.4,487.5 636.0,484.6" fill="#007a7a"/>
<polyline points="400.0,426.5 647.4,490.0" fill="none" stroke="#f0f0f0" stroke-width="0.9"/>
<polyline points="400.0,428.5 647.4,492.0" fill="none" stroke="#b8b8b8" stroke-width="0.5"/>
<polygon points="416.0,433.1 462.5,445.1 462.5,471.1 416.0,459.1" fill="#f6f6f6"/>
<polygon points="417.5,435.5 422.4,436.7 422.4,458.7 417.5,457.5" fill="#c6cace"/>
<polygon points="423.9,437.1 431.4,439.1 431.4,461.1 423.9,459.1" fill="#c6cace"/>
<polygon points="433.2,439.5 437.2,440.6 437.2,462.6 433.2,461.5" fill="#c6cace"/>
<polygon points="441.2,441.6 446.1,442.8 446.1,464.8 441.2,463.6" fill="#c6cace"/>
<polygon points="447.6,443.2 455.1,445.2 455.1,467.2 447.6,465.2" fill="#c6cace"/>
<polygon points="456.9,445.6 461.0,446.7 461.0,468.7 456.9,467.6" fill="#c6cace"/>
<polygon points="417.5,435.5 422.0,436.6 422.0,447.6 417.5,446.5" fill="#55fc50"/>
<polygon points="423.5,437.0 429.0,438.4 429.0,443.4 423.5,442.0" fill="#55fc50"/>
<polyline points="416.0,441.6 462.5,453.6" fill="none" stroke="#f6f6f6" stroke-width="1.0"/>
<polygon points="482.5,450.2 529.0,462.1 529.0,488.1 482.5,476.2" fill="#f6f6f6"/>
<polygon points="484.0,452.6 488.9,453.8 488.9,475.8 484.0,474.6" fill="#c6cace"/>
<polygon points="490.4,454.2 497.9,456.1 497.9,478.1 490.4,476.2" fill="#c6cace"/>
<polygon points="499.7,456.6 503.8,457.6 503.8,479.6 499.7,478.6" fill="#c6cace"/>
<polygon points="507.8,458.7 512.6,459.9 512.6,481.9 507.8,480.7" fill="#c6cace"/>
<polygon points="514.1,460.3 521.6,462.2 521.6,484.2 514.1,482.3" fill="#c6cace"/>
<polygon points="523.4,462.7 527.5,463.7 527.5,485.7 523.4,484.7" fill="#c6cace"/>
<polygon points="484.0,452.6 488.5,453.7 488.5,464.7 484.0,463.6" fill="#bf8486"/>
<polygon points="490.0,454.1 495.5,455.5 495.5,460.5 490.0,459.1" fill="#bf8486"/>
<polyline points="482.5,458.7 529.0,470.6" fill="none" stroke="#f6f6f6" stroke-width="1.0"/>
<polygon points="548.0,467.0 594.4,478.9 594.4,504.9 548.0,493.0" fill="#f6f6f6"/>
<polygon points="549.5,469.4 554.4,470.6 554.4,492.6 549.5,491.4" fill="#c6cace"/>
<polygon points="555.9,471.0 563.3,472.9 563.3,494.9 555.9,493.0" fill="#c6cace"/>
<polygon points="565.1,473.4 569.2,474.5 569.2,496.5 565.1,495.4" fill="#c6cace"/>
<polygon points="573.2,475.5 578.1,476.7 578.1,498.7 573.2,497.5" fill="#c6cace"/>
<polygon points="579.6,477.1 587.0,479.0 587.0,501.0 579.6,499.1" fill="#c6cace"/>
<polygon points="588.8,479.5 592.9,480.5 592.9,502.5 588.8,501.5" fill="#c6cace"/>
<polygon points="549.5,469.4 554.0,470.5 554.0,481.5 549.5,480.4" fill="#bf8486"/>
<polygon points="555.5,470.9 561.0,472.3 561.0,477.3 555.5,475.9" fill="#bf8486"/>
<polyline points="548.0,475.5 594.4,487.4" fill="none" stroke="#f6f6f6" stroke-width="1.0"/>
<polygon points="614.0,484.0 637.0,489.9 637.0,515.9 614.0,510.0" fill="#f6f6f6"/>
<polygon points="615.5,486.3 617.1,486.7 617.1,508.7 615.5,508.3" fill="#c6cace"/>
<polygon points="618.6,487.1 620.9,487.7 620.9,509.7 618.6,509.1" fill="#c6cace"/>
<polygon points="622.7,488.2 623.5,488.4 623.5,510.4 622.7,510.2" fill="#c6cace"/>
<polygon points="627.5,489.4 629.1,489.8 629.1,511.8 627.5,511.4" fill="#c6cace"/>
<polygon points="630.6,490.2 632.9,490.8 632.9,512.8 630.6,512.2" fill="#c6cace"/>
<polygon points="634.7,491.3 635.5,491.5 635.5,513.5 634.7,513.3" fill="#c6cace"/>
<polygon points="615.5,486.3 620.0,487.5 620.0,498.5 615.5,497.3" fill="#bf8486"/>
<polygon points="621.5,487.9 627.0,489.3 627.0,494.3 621.5,492.9" fill="#bf8486"/>
<polyline points="614.0,492.5 637.0,498.4" fill="none" stroke="#f6f6f6" stroke-width="1.0"/>
<polygon points="469.5,444.8 474.5,446.1 474.5,485.1 469.5,483.8" fill="#8a8a10"/>
<polyline points="469.5,444.8 469.5,483.8" fill="none" stroke="#e8e8a0" stroke-width="0.5"/>
<polyline points="474.5,446.1 474.5,485.1" fill="none" stroke="#e8e8a0" stroke-width="0.5"/>
<polygon points="537.0,462.2 541.5,463.3 541.5,502.3 537.0,501.2" fill="#8a8a10"/>
<polyline points="537.0,462.2 537.0,501.2" fill="none" stroke="#e8e8a0" stroke-width="0.5"/>
<polyline points="541.5,463.3 541.5,502.3" fill="none" stroke="#e8e8a0" stroke-width="0.5"/>
<polygon points="602.5,479.0 606.5,480.0 606.5,519.0 602.5,518.0" fill="#8a8a10"/>
<polyline points="602.5,479.0 602.5,518.0" fill="none" stroke="#e8e8a0" stroke-width="0.5"/>
<polyline points="606.5,480.0 606.5,519.0" fill="none" stroke="#e8e8a0" stroke-width="0.5"/>
<polygon points="400.0,427.0 405.0,428.3 405.0,467.3 400.0,466.0" fill="#bf8486"/>
<polygon points="405.5,428.4 407.5,428.9 407.5,467.9 405.5,467.4" fill="#8a8a10"/>
<polyline points="405.0,461.8 647.4,524.0" fill="none" stroke="#d0c0c0" stroke-width="0.6"/>
<polyline points="400.0,270.0 400.0,466.0" fill="none" stroke="#fff" stroke-width="0.9"/>
<polygon points="647.4,338.5 882.0,398.8 882.0,596.8 647.4,536.5" fill="#1f721f"/>
<polygon points="647.4,325.1 674.0,332.0 674.0,550.4 647.4,541.5" fill="#1f721f"/>
<polygon points="647.4,325.1 674.0,332.0 674.0,361.5 647.4,354.6" fill="#4a2a2c"/>
<polygon points="653.4,333.1 668.0,337.5 668.0,353.5 653.4,349.1" fill="#fdfdfd"/>
<polygon points="656.9,335.1 658.9,334.6 658.9,346.1 656.9,346.6" fill="#bf8486"/>
<polygon points="660.9,334.6 663.9,334.1 663.9,342.1 660.9,345.6" fill="#bf8486"/>
<polygon points="647.4,325.1 666.4,308.0 690.1,319.7 674.0,332.0" fill="#e6e6e6" stroke="#fff" stroke-width="0.7"/>
<polygon points="674.0,332.0 690.1,319.7 690.1,348.0 674.0,361.5" fill="#bf8486"/>
<polygon points="654.4,364.3 667.0,367.6 667.0,392.6 654.4,389.3" fill="#fdfdfd"/>
<polygon points="656.4,366.8 658.9,367.5 658.9,387.5 656.4,386.8" fill="#e6e62a"/>
<polygon points="660.9,368.0 665.0,369.1 665.0,389.1 660.9,388.0" fill="#d4d8dc"/>
<polygon points="654.4,386.8 667.0,390.1 667.0,392.6 654.4,389.3" fill="#2a2a2a"/>
<polygon points="654.4,401.3 667.0,404.6 667.0,429.6 654.4,426.3" fill="#fdfdfd"/>
<polygon points="656.4,403.8 658.9,404.5 658.9,424.5 656.4,423.8" fill="#e6e62a"/>
<polygon points="660.9,405.0 665.0,406.1 665.0,426.1 660.9,425.0" fill="#d4d8dc"/>
<polygon points="654.4,423.8 667.0,427.1 667.0,429.6 654.4,426.3" fill="#2a2a2a"/>
<polyline points="647.4,389.5 674.0,396.4" fill="none" stroke="#e8f4e8" stroke-width="0.7"/>
<polygon points="654.4,438.3 667.0,441.6 667.0,466.6 654.4,463.3" fill="#fdfdfd"/>
<polygon points="656.4,440.8 658.9,441.5 658.9,461.5 656.4,460.8" fill="#e6e62a"/>
<polygon points="660.9,442.0 665.0,443.1 665.0,463.1 660.9,462.0" fill="#d4d8dc"/>
<polygon points="654.4,460.8 667.0,464.1 667.0,466.6 654.4,463.3" fill="#5a3a3a"/>
<polyline points="647.4,426.5 674.0,433.4" fill="none" stroke="#e8f4e8" stroke-width="0.7"/>
<polygon points="654.4,475.3 667.0,478.6 667.0,503.6 654.4,500.3" fill="#fdfdfd"/>
<polygon points="656.4,477.8 658.9,478.5 658.9,498.5 656.4,497.8" fill="#e6e62a"/>
<polygon points="660.9,479.0 665.0,480.1 665.0,500.1 660.9,499.0" fill="#d4d8dc"/>
<polygon points="654.4,497.8 667.0,501.1 667.0,503.6 654.4,500.3" fill="#5a3a3a"/>
<polyline points="647.4,463.5 674.0,470.4" fill="none" stroke="#e8f4e8" stroke-width="0.7"/>
<polygon points="654.4,512.3 667.0,515.6 667.0,540.6 654.4,537.3" fill="#fdfdfd"/>
<polygon points="656.4,514.8 658.9,515.5 658.9,535.5 656.4,534.8" fill="#e8e8e8"/>
<polygon points="660.9,516.0 665.0,517.1 665.0,537.1 660.9,536.0" fill="#d4d8dc"/>
<polygon points="654.4,534.8 667.0,538.1 667.0,540.6 654.4,537.3" fill="#2a2a2a"/>
<polyline points="647.4,500.5 674.0,507.4" fill="none" stroke="#e8f4e8" stroke-width="0.7"/>
<polyline points="647.4,325.1 647.4,541.5" fill="none" stroke="#f4f4f4" stroke-width="0.7"/>
<polyline points="674.0,332.0 674.0,550.4" fill="none" stroke="#f4f4f4" stroke-width="0.7"/>
<polygon points="824.2,371.2 850.8,378.1 850.8,595.8 824.2,586.9" fill="#1f721f"/>
<polygon points="824.2,371.2 850.8,378.1 850.8,407.6 824.2,400.7" fill="#4a2a2c"/>
<polygon points="830.2,379.2 844.8,383.6 844.8,399.6 830.2,395.2" fill="#fdfdfd"/>
<polygon points="833.7,381.2 835.7,380.7 835.7,392.2 833.7,392.7" fill="#bf8486"/>
<polygon points="837.7,380.7 840.7,380.2 840.7,388.2 837.7,391.7" fill="#bf8486"/>
<polygon points="824.2,371.2 843.2,354.1 866.9,365.8 850.8,378.1" fill="#e6e6e6" stroke="#fff" stroke-width="0.7"/>
<polygon points="850.8,378.1 866.9,365.8 866.9,394.1 850.8,407.6" fill="#bf8486"/>
<polygon points="831.2,409.7 843.8,413.0 843.8,438.0 831.2,434.7" fill="#fdfdfd"/>
<polygon points="833.2,412.2 835.7,412.9 835.7,432.9 833.2,432.2" fill="#e6e62a"/>
<polygon points="837.7,413.4 841.8,414.5 841.8,434.5 837.7,433.4" fill="#d4d8dc"/>
<polygon points="831.2,432.2 843.8,435.5 843.8,438.0 831.2,434.7" fill="#2a2a2a"/>
<polygon points="831.2,446.7 843.8,450.0 843.8,475.0 831.2,471.7" fill="#fdfdfd"/>
<polygon points="833.2,449.2 835.7,449.9 835.7,469.9 833.2,469.2" fill="#e6e62a"/>
<polygon points="837.7,450.4 841.8,451.5 841.8,471.5 837.7,470.4" fill="#d4d8dc"/>
<polygon points="831.2,469.2 843.8,472.5 843.8,475.0 831.2,471.7" fill="#2a2a2a"/>
<polyline points="824.2,434.9 850.8,441.8" fill="none" stroke="#e8f4e8" stroke-width="0.7"/>
<polygon points="831.2,483.7 843.8,487.0 843.8,512.0 831.2,508.7" fill="#fdfdfd"/>
<polygon points="833.2,486.2 835.7,486.9 835.7,506.9 833.2,506.2" fill="#e6e62a"/>
<polygon points="837.7,487.4 841.8,488.5 841.8,508.5 837.7,507.4" fill="#d4d8dc"/>
<polygon points="831.2,506.2 843.8,509.5 843.8,512.0 831.2,508.7" fill="#5a3a3a"/>
<polyline points="824.2,471.9 850.8,478.8" fill="none" stroke="#e8f4e8" stroke-width="0.7"/>
<polygon points="831.2,520.7 843.8,524.0 843.8,549.0 831.2,545.7" fill="#fdfdfd"/>
<polygon points="833.2,523.2 835.7,523.9 835.7,543.9 833.2,543.2" fill="#e6e62a"/>
<polygon points="837.7,524.4 841.8,525.5 841.8,545.5 837.7,544.4" fill="#d4d8dc"/>
<polygon points="831.2,543.2 843.8,546.5 843.8,549.0 831.2,545.7" fill="#5a3a3a"/>
<polyline points="824.2,508.9 850.8,515.8" fill="none" stroke="#e8f4e8" stroke-width="0.7"/>
<polygon points="831.2,557.7 843.8,561.0 843.8,586.0 831.2,582.7" fill="#fdfdfd"/>
<polygon points="833.2,560.2 835.7,560.9 835.7,580.9 833.2,580.2" fill="#e8e8e8"/>
<polygon points="837.7,561.4 841.8,562.5 841.8,582.5 837.7,581.4" fill="#d4d8dc"/>
<polygon points="831.2,580.2 843.8,583.5 843.8,586.0 831.2,582.7" fill="#2a2a2a"/>
<polyline points="824.2,545.9 850.8,552.8" fill="none" stroke="#e8f4e8" stroke-width="0.7"/>
<polyline points="824.2,371.2 824.2,586.9" fill="none" stroke="#f4f4f4" stroke-width="0.7"/>
<polyline points="850.8,378.1 850.8,595.8" fill="none" stroke="#f4f4f4" stroke-width="0.7"/>
<polygon points="674.0,352.4 680.6,354.1 680.6,545.1 674.0,543.4" fill="#a8a8a8"/>
<polygon points="674.0,352.4 680.6,354.1 680.6,427.1 674.0,425.4" fill="#55fc50"/>
<polygon points="675.5,445.7 679.0,446.6 679.0,476.6 675.5,475.7" fill="#55fc50"/>
<polygon points="850.8,397.8 858.0,399.6 858.0,582.6 850.8,580.8" fill="#55fc50"/>
<polygon points="851.5,550.9 856.0,552.1 856.0,582.1 851.5,580.9" fill="#9a9a9a"/>
<polygon points="851.5,410.9 855.0,411.8 855.0,431.8 851.5,430.9" fill="#9a9a9a"/>
<polygon points="680.6,347.1 824.2,383.9 824.2,390.9 680.6,354.1" fill="#2b2b2b"/>
<polyline points="680.6,347.1 824.2,383.9" fill="none" stroke="#fff" stroke-width="0.8"/>
<polygon points="680.6,354.1 719.5,364.0 719.5,401.0 680.6,391.1" fill="#1f721f"/>
<polygon points="689.1,365.7 713.9,372.1 713.9,397.1 689.1,390.7" fill="#fdfdfd"/>
<polygon points="690.4,368.6 694.6,369.7 694.6,388.7 690.4,387.6" fill="#d6d9dd"/>
<polygon points="696.6,370.2 700.8,371.2 700.8,390.2 696.6,389.2" fill="#d6d9dd"/>
<polygon points="702.8,371.8 707.0,372.8 707.0,391.8 702.8,390.8" fill="#d6d9dd"/>
<polygon points="709.0,373.4 713.2,374.4 713.2,393.4 709.0,392.4" fill="#d6d9dd"/>
<polyline points="689.1,374.7 713.9,381.1" fill="none" stroke="#fff" stroke-width="1"/>
<polyline points="689.1,381.2 713.9,387.6" fill="none" stroke="#fff" stroke-width="1"/>
<polygon points="689.1,388.2 713.9,394.6 713.9,397.1 689.1,390.7" fill="#3a2a2a"/>
<polyline points="680.6,354.1 719.5,364.0" fill="none" stroke="#e8f4e8" stroke-width="0.7"/>
<polygon points="790.7,382.3 824.2,390.9 824.2,427.9 790.7,419.3" fill="#1f721f"/>
<polygon points="798.3,393.8 822.0,399.9 822.0,424.9 798.3,418.8" fill="#fdfdfd"/>
<polygon points="799.6,396.6 803.5,397.6 803.5,416.6 799.6,415.6" fill="#d6d9dd"/>
<polygon points="805.5,398.1 809.5,399.1 809.5,418.1 805.5,417.1" fill="#d6d9dd"/>
<polygon points="811.5,399.7 815.4,400.7 815.4,419.7 811.5,418.7" fill="#d6d9dd"/>
<polygon points="817.4,401.2 821.3,402.2 821.3,421.2 817.4,420.2" fill="#d6d9dd"/>
<polyline points="798.3,402.8 822.0,408.9" fill="none" stroke="#fff" stroke-width="1"/>
<polyline points="798.3,409.3 822.0,415.4" fill="none" stroke="#fff" stroke-width="1"/>
<polygon points="798.3,416.3 822.0,422.4 822.0,424.9 798.3,418.8" fill="#3a2a2a"/>
<polyline points="790.7,382.3 824.2,390.9" fill="none" stroke="#e8f4e8" stroke-width="0.7"/>
<polygon points="680.6,391.1 719.5,401.0 719.5,438.0 680.6,428.1" fill="#1f721f"/>
<polygon points="689.1,402.7 713.9,409.1 713.9,434.1 689.1,427.7" fill="#fdfdfd"/>
<polygon points="690.4,405.6 694.6,406.7 694.6,425.7 690.4,424.6" fill="#d6d9dd"/>
<polygon points="696.6,407.2 700.8,408.2 700.8,427.2 696.6,426.2" fill="#d6d9dd"/>
<polygon points="702.8,408.8 707.0,409.8 707.0,428.8 702.8,427.8" fill="#d6d9dd"/>
<polygon points="709.0,410.4 713.2,411.4 713.2,430.4 709.0,429.4" fill="#d6d9dd"/>
<polyline points="689.1,411.7 713.9,418.1" fill="none" stroke="#fff" stroke-width="1"/>
<polyline points="689.1,418.2 713.9,424.6" fill="none" stroke="#fff" stroke-width="1"/>
<polygon points="689.1,425.2 713.9,431.6 713.9,434.1 689.1,427.7" fill="#3a2a2a"/>
<polyline points="680.6,391.1 719.5,401.0" fill="none" stroke="#e8f4e8" stroke-width="0.7"/>
<polygon points="790.7,419.3 824.2,427.9 824.2,464.9 790.7,456.3" fill="#1f721f"/>
<polygon points="798.3,430.8 822.0,436.9 822.0,461.9 798.3,455.8" fill="#fdfdfd"/>
<polygon points="799.6,433.6 803.5,434.6 803.5,453.6 799.6,452.6" fill="#d6d9dd"/>
<polygon points="805.5,435.1 809.5,436.1 809.5,455.1 805.5,454.1" fill="#d6d9dd"/>
<polygon points="811.5,436.7 815.4,437.7 815.4,456.7 811.5,455.7" fill="#d6d9dd"/>
<polygon points="817.4,438.2 821.3,439.2 821.3,458.2 817.4,457.2" fill="#d6d9dd"/>
<polyline points="798.3,439.8 822.0,445.9" fill="none" stroke="#fff" stroke-width="1"/>
<polyline points="798.3,446.3 822.0,452.4" fill="none" stroke="#fff" stroke-width="1"/>
<polygon points="798.3,453.3 822.0,459.4 822.0,461.9 798.3,455.8" fill="#3a2a2a"/>
<polygon points="799.3,434.5 802.8,435.4 802.8,446.4 799.3,445.5" fill="#bf8486"/>
<polyline points="790.7,419.3 824.2,427.9" fill="none" stroke="#e8f4e8" stroke-width="0.7"/>
<polygon points="680.6,428.1 719.5,438.0 719.5,475.0 680.6,465.1" fill="#1f721f"/>
<polygon points="689.1,439.7 713.9,446.1 713.9,471.1 689.1,464.7" fill="#fdfdfd"/>
<polygon points="690.4,442.6 694.6,443.7 694.6,462.7 690.4,461.6" fill="#d6d9dd"/>
<polygon points="696.6,444.2 700.8,445.2 700.8,464.2 696.6,463.2" fill="#d6d9dd"/>
<polygon points="702.8,445.8 707.0,446.8 707.0,465.8 702.8,464.8" fill="#d6d9dd"/>
<polygon points="709.0,447.4 713.2,448.4 713.2,467.4 709.0,466.4" fill="#d6d9dd"/>
<polyline points="689.1,448.7 713.9,455.1" fill="none" stroke="#fff" stroke-width="1"/>
<polyline points="689.1,455.2 713.9,461.6" fill="none" stroke="#fff" stroke-width="1"/>
<polygon points="689.1,462.2 713.9,468.6 713.9,471.1 689.1,464.7" fill="#3a2a2a"/>
<polygon points="690.1,443.5 693.6,444.4 693.6,455.4 690.1,454.5" fill="#bf8486"/>
<polyline points="680.6,428.1 719.5,438.0" fill="none" stroke="#e8f4e8" stroke-width="0.7"/>
<polygon points="790.7,456.3 824.2,464.9 824.2,501.9 790.7,493.3" fill="#1f721f"/>
<polygon points="798.3,467.8 822.0,473.9 822.0,498.9 798.3,492.8" fill="#fdfdfd"/>
<polygon points="799.6,470.6 803.5,471.6 803.5,490.6 799.6,489.6" fill="#d6d9dd"/>
<polygon points="805.5,472.1 809.5,473.1 809.5,492.1 805.5,491.1" fill="#d6d9dd"/>
<polygon points="811.5,473.7 815.4,474.7 815.4,493.7 811.5,492.7" fill="#d6d9dd"/>
<polygon points="817.4,475.2 821.3,476.2 821.3,495.2 817.4,494.2" fill="#d6d9dd"/>
<polyline points="798.3,476.8 822.0,482.9" fill="none" stroke="#fff" stroke-width="1"/>
<polyline points="798.3,483.3 822.0,489.4" fill="none" stroke="#fff" stroke-width="1"/>
<polygon points="798.3,490.3 822.0,496.4 822.0,498.9 798.3,492.8" fill="#3a2a2a"/>
<polygon points="799.3,471.5 802.8,472.4 802.8,483.4 799.3,482.5" fill="#bf8486"/>
<polyline points="790.7,456.3 824.2,464.9" fill="none" stroke="#e8f4e8" stroke-width="0.7"/>
<polygon points="680.6,465.1 719.5,475.0 719.5,512.0 680.6,502.1" fill="#1f721f"/>
<polygon points="689.1,476.7 713.9,483.1 713.9,508.1 689.1,501.7" fill="#fdfdfd"/>
<polygon points="690.4,479.6 694.6,480.7 694.6,499.7 690.4,498.6" fill="#d6d9dd"/>
<polygon points="696.6,481.2 700.8,482.2 700.8,501.2 696.6,500.2" fill="#d6d9dd"/>
<polygon points="702.8,482.8 707.0,483.8 707.0,502.8 702.8,501.8" fill="#d6d9dd"/>
<polygon points="709.0,484.4 713.2,485.4 713.2,504.4 709.0,503.4" fill="#d6d9dd"/>
<polyline points="689.1,485.7 713.9,492.1" fill="none" stroke="#fff" stroke-width="1"/>
<polyline points="689.1,492.2 713.9,498.6" fill="none" stroke="#fff" stroke-width="1"/>
<polygon points="689.1,499.2 713.9,505.6 713.9,508.1 689.1,501.7" fill="#3a2a2a"/>
<polyline points="680.6,465.1 719.5,475.0" fill="none" stroke="#e8f4e8" stroke-width="0.7"/>
<polygon points="790.7,493.3 824.2,501.9 824.2,538.9 790.7,530.3" fill="#1f721f"/>
<polygon points="798.3,504.8 822.0,510.9 822.0,535.9 798.3,529.8" fill="#fdfdfd"/>
<polygon points="799.6,507.6 803.5,508.6 803.5,527.6 799.6,526.6" fill="#d6d9dd"/>
<polygon points="805.5,509.1 809.5,510.1 809.5,529.1 805.5,528.1" fill="#d6d9dd"/>
<polygon points="811.5,510.7 815.4,511.7 815.4,530.7 811.5,529.7" fill="#d6d9dd"/>
<polygon points="817.4,512.2 821.3,513.2 821.3,532.2 817.4,531.2" fill="#d6d9dd"/>
<polyline points="798.3,513.8 822.0,519.9" fill="none" stroke="#fff" stroke-width="1"/>
<polyline points="798.3,520.3 822.0,526.4" fill="none" stroke="#fff" stroke-width="1"/>
<polygon points="798.3,527.3 822.0,533.4 822.0,535.9 798.3,529.8" fill="#3a2a2a"/>
<polyline points="790.7,493.3 824.2,501.9" fill="none" stroke="#e8f4e8" stroke-width="0.7"/>
<polygon points="680.6,502.1 719.5,512.0 719.5,549.0 680.6,539.1" fill="#1f721f"/>
<polygon points="689.1,513.7 713.9,520.1 713.9,545.1 689.1,538.7" fill="#fdfdfd"/>
<polygon points="690.4,516.6 694.6,517.7 694.6,536.7 690.4,535.6" fill="#d6d9dd"/>
<polygon points="696.6,518.2 700.8,519.2 700.8,538.2 696.6,537.2" fill="#d6d9dd"/>
<polygon points="702.8,519.8 707.0,520.8 707.0,539.8 702.8,538.8" fill="#d6d9dd"/>
<polygon points="709.0,521.4 713.2,522.4 713.2,541.4 709.0,540.4" fill="#d6d9dd"/>
<polyline points="689.1,522.7 713.9,529.1" fill="none" stroke="#fff" stroke-width="1"/>
<polyline points="689.1,529.2 713.9,535.6" fill="none" stroke="#fff" stroke-width="1"/>
<polygon points="689.1,536.2 713.9,542.6 713.9,545.1 689.1,538.7" fill="#3a2a2a"/>
<polyline points="680.6,502.1 719.5,512.0" fill="none" stroke="#e8f4e8" stroke-width="0.7"/>
<polygon points="790.7,530.3 824.2,538.9 824.2,575.9 790.7,567.3" fill="#1f721f"/>
<polygon points="798.3,541.8 822.0,547.9 822.0,572.9 798.3,566.8" fill="#fdfdfd"/>
<polygon points="799.6,544.6 803.5,545.6 803.5,564.6 799.6,563.6" fill="#d6d9dd"/>
<polygon points="805.5,546.1 809.5,547.1 809.5,566.1 805.5,565.1" fill="#d6d9dd"/>
<polygon points="811.5,547.7 815.4,548.7 815.4,567.7 811.5,566.7" fill="#d6d9dd"/>
<polygon points="817.4,549.2 821.3,550.2 821.3,569.2 817.4,568.2" fill="#d6d9dd"/>
<polyline points="798.3,550.8 822.0,556.9" fill="none" stroke="#fff" stroke-width="1"/>
<polyline points="798.3,557.3 822.0,563.4" fill="none" stroke="#fff" stroke-width="1"/>
<polygon points="798.3,564.3 822.0,570.4 822.0,572.9 798.3,566.8" fill="#3a2a2a"/>
<polyline points="790.7,530.3 824.2,538.9" fill="none" stroke="#e8f4e8" stroke-width="0.7"/>
<polygon points="719.5,364.0 724.3,365.3 724.3,508.3 719.5,507.0" fill="#8a8a10"/>
<polyline points="721.9,364.7 721.9,507.7" fill="none" stroke="#f0f060" stroke-width="0.8"/>
<polygon points="786.0,381.1 790.7,382.3 790.7,495.3 786.0,494.1" fill="#8a8a10"/>
<polyline points="788.3,381.7 788.3,494.7" fill="none" stroke="#f0f060" stroke-width="0.8"/>
<polyline points="719.5,364.0 719.5,553.0" fill="none" stroke="#f4f4f4" stroke-width="0.6"/>
<polyline points="790.7,382.3 790.7,571.3" fill="none" stroke="#f4f4f4" stroke-width="0.6"/>
<polygon points="724.3,365.3 786.0,381.1 786.0,524.1 724.3,508.3" fill="#cfd2d5"/>
<polygon points="724.3,366.3 786.0,382.1 786.0,391.1 724.3,375.3" fill="#007a7a"/>
<polygon points="724.3,375.3 786.0,391.1 786.0,393.6 724.3,377.8" fill="#f4f4f4"/>
<polygon points="724.3,399.8 786.0,415.6 786.0,417.6 724.3,401.8" fill="#4a3030"/>
<polygon points="724.3,401.8 786.0,417.6 786.0,419.1 724.3,403.3" fill="#f4f4f4"/>
<polyline points="724.3,389.3 786.0,405.1" fill="none" stroke="#f4f4f4" stroke-width="1.0"/>
<polygon points="730.0,378.7 742.0,381.8 730.0,390.7" fill="#bf8486"/>
<polygon points="724.3,403.3 786.0,419.1 786.0,428.1 724.3,412.3" fill="#007a7a"/>
<polygon points="724.3,412.3 786.0,428.1 786.0,430.6 724.3,414.8" fill="#f4f4f4"/>
<polygon points="724.3,436.8 786.0,452.6 786.0,454.6 724.3,438.8" fill="#4a3030"/>
<polygon points="724.3,438.8 786.0,454.6 786.0,456.1 724.3,440.3" fill="#f4f4f4"/>
<polyline points="724.3,426.3 786.0,442.1" fill="none" stroke="#f4f4f4" stroke-width="1.0"/>
<polygon points="730.0,415.7 742.0,418.8 730.0,427.7" fill="#bf8486"/>
<polygon points="724.3,440.3 786.0,456.1 786.0,465.1 724.3,449.3" fill="#007a7a"/>
<polygon points="724.3,449.3 786.0,465.1 786.0,467.6 724.3,451.8" fill="#f4f4f4"/>
<polygon points="724.3,473.8 786.0,489.6 786.0,491.6 724.3,475.8" fill="#4a3030"/>
<polygon points="724.3,475.8 786.0,491.6 786.0,493.1 724.3,477.3" fill="#f4f4f4"/>
<polyline points="724.3,463.3 786.0,479.1" fill="none" stroke="#f4f4f4" stroke-width="1.0"/>
<polygon points="730.0,452.7 742.0,455.8 730.0,464.7" fill="#bf8486"/>
<polyline points="724.3,500.3 786.0,516.1" fill="none" stroke="#f4f4f4" stroke-width="1.0"/>
<polygon points="730.0,489.7 742.0,492.8 730.0,501.7" fill="#bf8486"/>
<polyline points="727.0,366.0 727.0,509.0" fill="none" stroke="#f8f8f8" stroke-width="1.2"/>
<polyline points="755.0,373.2 755.0,516.2" fill="none" stroke="#f8f8f8" stroke-width="1.2"/>
<polyline points="783.0,380.4 783.0,523.4" fill="none" stroke="#f8f8f8" stroke-width="1.2"/>
<polygon points="727.5,409.1 730.0,409.7 730.0,509.7 727.5,509.1" fill="#e6e62a"/>
<polygon points="857.7,392.5 882.0,398.8 882.0,594.8 857.7,588.5" fill="#4a2a2c"/>
<polygon points="857.7,392.5 882.0,398.8 882.0,405.8 857.7,399.5" fill="#2b2b2b"/>
<polyline points="857.7,392.5 882.0,398.8" fill="none" stroke="#fff" stroke-width="0.8"/>
<polygon points="861.0,410.4 877.0,414.5 877.0,557.5 861.0,553.4" fill="#eceeef"/>
<polygon points="870.0,412.7 876.0,414.2 876.0,557.2 870.0,555.7" fill="#bf8486"/>
<polygon points="863.0,410.9 865.5,411.5 865.5,554.5 863.0,553.9" fill="#c8d4a0"/>
<polygon points="858.0,401.6 882.0,407.8 882.0,411.3 858.0,405.1" fill="#007a7a"/>
<polygon points="879.0,409.0 882.0,409.8 882.0,414.8 879.0,414.0" fill="#00e4ee"/>
<polygon points="858.0,438.6 882.0,444.8 882.0,448.3 858.0,442.1" fill="#007a7a"/>
<polygon points="879.0,446.0 882.0,446.8 882.0,451.8 879.0,451.0" fill="#00e4ee"/>
<polygon points="861.0,437.4 877.0,441.5 877.0,444.5 861.0,440.4" fill="#f4f4f4"/>
<polygon points="858.0,475.6 882.0,481.8 882.0,485.3 858.0,479.1" fill="#007a7a"/>
<polygon points="879.0,483.0 882.0,483.8 882.0,488.8 879.0,488.0" fill="#00e4ee"/>
<polygon points="861.0,474.4 877.0,478.5 877.0,481.5 861.0,477.4" fill="#f4f4f4"/>
<polygon points="858.0,512.6 882.0,518.8 882.0,522.3 858.0,516.1" fill="#007a7a"/>
<polygon points="879.0,520.0 882.0,520.8 882.0,525.8 879.0,525.0" fill="#00e4ee"/>
<polygon points="861.0,511.4 877.0,515.5 877.0,518.5 861.0,514.4" fill="#f4f4f4"/>
<polygon points="858.0,549.6 882.0,555.8 882.0,559.3 858.0,553.1" fill="#007a7a"/>
<polygon points="879.0,557.0 882.0,557.8 882.0,562.8 879.0,562.0" fill="#00e4ee"/>
<polygon points="861.0,548.4 877.0,552.5 877.0,555.5 861.0,551.4" fill="#f4f4f4"/>
<polygon points="858.0,550.6 882.0,556.8 882.0,594.8 858.0,588.6" fill="#4a2a2c"/>
<polygon points="858.0,550.6 861.0,551.4 861.0,589.4 858.0,588.6" fill="#e6e62a"/>
<polygon points="861.0,551.4 865.0,552.4 865.0,590.4 861.0,589.4" fill="#55fc50"/>
<polygon points="712.0,473.1 717.6,474.6 717.6,556.6 712.0,555.1" fill="#2a2a2a"/>
<polygon points="717.6,474.6 722.0,475.7 722.0,557.7 717.6,556.6" fill="#8a8a8a"/>
<polygon points="786.0,492.1 791.6,493.6 791.6,575.6 786.0,574.1" fill="#2a2a2a"/>
<polygon points="791.6,493.6 795.0,494.4 795.0,576.4 791.6,575.6" fill="#9a9a9a"/>
<polygon points="717.6,506.6 786.0,524.1 786.0,574.1 717.6,556.6" fill="#e4e6e8"/>
<polygon points="722.0,482.7 786.0,499.1 786.0,524.1 722.0,507.7" fill="#d2d5d8"/>
<polygon points="758.0,494.9 762.0,496.0 762.0,518.0 758.0,516.9" fill="#8a8a10"/>
<polygon points="763.0,496.2 766.0,497.0 766.0,519.0 763.0,518.2" fill="#e6e62a"/>
<polygon points="772.0,498.5 780.0,500.6 780.0,506.6 772.0,504.5" fill="#e6e62a"/>
<polygon points="724.0,480.2 727.0,481.0 727.0,509.0 724.0,508.2" fill="#e6e62a"/>
<polygon points="711.0,465.9 794.0,487.2 794.0,494.2 711.0,472.9" fill="#6a6a6a"/>
<polyline points="711.0,465.9 794.0,487.2" fill="none" stroke="#d8d8d8" stroke-width="0.8"/>
<polyline points="711.0,472.9 794.0,494.2" fill="none" stroke="#c8c8c8" stroke-width="0.8"/>
<polyline points="722.0,507.7 786.0,524.1" fill="none" stroke="#4a3030" stroke-width="1.2"/>
<polyline points="722.0,519.7 722.0,555.7" fill="none" stroke="#fafafa" stroke-width="1.0"/>
<polygon points="724.0,528.2 727.0,529.0 727.0,549.0 724.0,548.2" fill="#c4c8cc"/>
<polyline points="729.6,521.6 729.6,557.6" fill="none" stroke="#fafafa" stroke-width="1.0"/>
<polyline points="737.2,523.6 737.2,559.6" fill="none" stroke="#fafafa" stroke-width="1.0"/>
<polygon points="739.2,532.1 742.2,532.9 742.2,552.9 739.2,552.1" fill="#c4c8cc"/>
<polyline points="744.8,525.5 744.8,561.5" fill="none" stroke="#fafafa" stroke-width="1.0"/>
<polyline points="752.4,527.5 752.4,563.5" fill="none" stroke="#fafafa" stroke-width="1.0"/>
<polygon points="754.4,536.0 757.4,536.8 757.4,556.8 754.4,556.0" fill="#c4c8cc"/>
<polyline points="760.0,529.4 760.0,565.4" fill="none" stroke="#fafafa" stroke-width="1.0"/>
<polyline points="767.6,531.4 767.6,567.4" fill="none" stroke="#fafafa" stroke-width="1.0"/>
<polygon points="769.6,539.9 772.6,540.7 772.6,560.7 769.6,559.9" fill="#c4c8cc"/>
<polyline points="775.2,533.4 775.2,569.4" fill="none" stroke="#fafafa" stroke-width="1.0"/>
<polyline points="782.8,535.3 782.8,571.3" fill="none" stroke="#fafafa" stroke-width="1.0"/>
<polygon points="784.8,543.8 787.8,544.6 787.8,564.6 784.8,563.8" fill="#c4c8cc"/>
<polygon points="710.0,525.3 726.0,513.0 786.0,528.5 771.0,541.5" fill="#d8ecf6" opacity="0.85"/>
<polygon points="728.0,513.6 734.5,515.3 726.5,522.0 720.0,520.3" fill="#007a7a"/>
<polygon points="737.6,516.1 744.1,517.8 736.1,524.5 729.6,522.8" fill="#007a7a"/>
<polygon points="747.2,518.5 753.7,520.2 745.7,526.9 739.2,525.2" fill="#007a7a"/>
<polygon points="756.8,521.0 763.3,522.7 755.3,529.4 748.8,527.7" fill="#007a7a"/>
<polygon points="766.4,523.4 772.9,525.1 764.9,531.8 758.4,530.1" fill="#007a7a"/>
<polygon points="776.0,525.9 782.5,527.6 774.5,534.3 768.0,532.6" fill="#007a7a"/>
<polyline points="710.0,525.3 771.0,541.5" fill="none" stroke="#f4fbff" stroke-width="0.9"/>
<polyline points="726.0,513.0 786.0,528.5" fill="none" stroke="#f4fbff" stroke-width="0.9"/>
<polygon points="882.0,393.8 986.5,420.6 986.5,616.6 882.0,589.8" fill="#4a2a2c"/>
<polygon points="884.9,394.5 986.5,420.6 986.5,427.6 884.9,401.5" fill="#2b2b2b"/>
<polyline points="884.9,394.5 986.5,420.6" fill="none" stroke="#fff" stroke-width="0.9"/>
<polyline points="884.9,401.5 986.5,427.6" fill="none" stroke="#e8e8e8" stroke-width="0.6"/>
<polygon points="882.0,393.8 885.0,394.5 885.0,554.5 882.0,553.8" fill="#9a8a8c"/>
<polygon points="887.8,409.3 909.6,414.9 909.6,557.4 887.8,551.8" fill="#fdfdfd"/>
<polygon points="889.0,413.1 908.6,418.1 908.6,435.6 889.0,430.6" fill="#f0f1f3"/>
<polygon points="889.0,413.6 890.2,413.9 890.2,429.9 889.0,429.6" fill="#a85058"/>
<polygon points="891.8,416.3 894.6,417.0 894.6,428.0 891.8,427.3" fill="#b4a4ac"/>
<polygon points="896.6,418.5 905.2,420.7 905.2,432.2 896.6,430.0" fill="#c6cace"/>
<polygon points="906.7,422.1 907.6,422.4 907.6,432.9 906.7,432.6" fill="#d8dade"/>
<polyline points="888.8,431.0 908.6,436.1" fill="none" stroke="#c4c4c4" stroke-width="0.8"/>
<polyline points="888.8,412.0 908.6,417.1" fill="none" stroke="#4a3a3a" stroke-width="0.8"/>
<polygon points="889.0,448.6 908.6,453.6 908.6,471.1 889.0,466.1" fill="#f0f1f3"/>
<polygon points="889.0,449.1 890.2,449.4 890.2,465.4 889.0,465.1" fill="#a85058"/>
<polygon points="891.8,451.8 894.6,452.5 894.6,463.5 891.8,462.8" fill="#b4a4ac"/>
<polygon points="896.6,454.0 905.2,456.2 905.2,467.7 896.6,465.5" fill="#c6cace"/>
<polygon points="906.7,457.6 907.6,457.9 907.6,468.4 906.7,468.1" fill="#d8dade"/>
<polyline points="888.8,466.5 908.6,471.6" fill="none" stroke="#c4c4c4" stroke-width="0.8"/>
<polyline points="888.8,447.5 908.6,452.6" fill="none" stroke="#4a3a3a" stroke-width="0.8"/>
<polygon points="889.0,484.1 908.6,489.1 908.6,506.6 889.0,501.6" fill="#f0f1f3"/>
<polygon points="889.0,484.6 890.2,484.9 890.2,500.9 889.0,500.6" fill="#a85058"/>
<polygon points="891.8,487.3 894.6,488.0 894.6,499.0 891.8,498.3" fill="#b4a4ac"/>
<polygon points="896.6,489.5 905.2,491.7 905.2,503.2 896.6,501.0" fill="#c6cace"/>
<polygon points="906.7,493.1 907.6,493.4 907.6,503.9 906.7,503.6" fill="#d8dade"/>
<polyline points="888.8,502.0 908.6,507.1" fill="none" stroke="#c4c4c4" stroke-width="0.8"/>
<polyline points="888.8,483.0 908.6,488.1" fill="none" stroke="#4a3a3a" stroke-width="0.8"/>
<polygon points="889.0,519.6 908.6,524.6 908.6,542.1 889.0,537.1" fill="#f0f1f3"/>
<polygon points="889.0,520.1 890.2,520.4 890.2,536.4 889.0,536.1" fill="#a85058"/>
<polygon points="891.8,522.8 894.6,523.5 894.6,534.5 891.8,533.8" fill="#b4a4ac"/>
<polygon points="896.6,525.0 905.2,527.2 905.2,538.7 896.6,536.5" fill="#c6cace"/>
<polygon points="906.7,528.6 907.6,528.9 907.6,539.4 906.7,539.1" fill="#d8dade"/>
<polyline points="888.8,537.5 908.6,542.6" fill="none" stroke="#c4c4c4" stroke-width="0.8"/>
<polyline points="888.8,518.5 908.6,523.6" fill="none" stroke="#4a3a3a" stroke-width="0.8"/>
<polyline points="877.8,441.7 919.6,452.4" fill="none" stroke="#f4eeee" stroke-width="0.7"/>
<polyline points="877.8,477.2 919.6,487.9" fill="none" stroke="#f4eeee" stroke-width="0.7"/>
<polyline points="877.8,512.7 919.6,523.4" fill="none" stroke="#f4eeee" stroke-width="0.7"/>
<polygon points="928.6,419.7 975.0,431.7 975.0,574.2 928.6,562.2" fill="#fdfdfd"/>
<polygon points="929.8,423.6 950.5,428.9 950.5,446.4 929.8,441.1" fill="#f0f1f3"/>
<polygon points="929.8,424.1 931.0,424.4 931.0,440.4 929.8,440.1" fill="#a85058"/>
<polygon points="932.6,426.8 935.6,427.5 935.6,438.5 932.6,437.8" fill="#b4a4ac"/>
<polygon points="937.6,429.0 946.9,431.4 946.9,442.9 937.6,440.5" fill="#c6cace"/>
<polygon points="948.4,432.8 949.5,433.1 949.5,443.6 948.4,443.3" fill="#d8dade"/>
<polyline points="929.6,441.5 950.5,446.9" fill="none" stroke="#c4c4c4" stroke-width="0.8"/>
<polyline points="929.6,422.5 950.5,427.9" fill="none" stroke="#4a3a3a" stroke-width="0.8"/>
<polygon points="952.7,429.4 974.0,434.9 974.0,452.4 952.7,446.9" fill="#f0f1f3"/>
<polygon points="952.7,429.9 953.9,430.2 953.9,446.2 952.7,445.9" fill="#a85058"/>
<polygon points="955.5,432.7 958.6,433.4 958.6,444.4 955.5,443.7" fill="#b4a4ac"/>
<polygon points="960.6,435.0 970.3,437.5 970.3,449.0 960.6,446.5" fill="#c6cace"/>
<polygon points="971.8,438.8 973.0,439.1 973.0,449.6 971.8,449.3" fill="#d8dade"/>
<polyline points="952.5,447.4 974.0,452.9" fill="none" stroke="#c4c4c4" stroke-width="0.8"/>
<polyline points="952.5,428.4 974.0,433.9" fill="none" stroke="#4a3a3a" stroke-width="0.8"/>
<polygon points="929.8,459.1 950.5,464.4 950.5,481.9 929.8,476.6" fill="#f0f1f3"/>
<polygon points="929.8,459.6 931.0,459.9 931.0,475.9 929.8,475.6" fill="#a85058"/>
<polygon points="932.6,462.3 935.6,463.0 935.6,474.0 932.6,473.3" fill="#b4a4ac"/>
<polygon points="937.6,464.5 946.9,466.9 946.9,478.4 937.6,476.0" fill="#c6cace"/>
<polygon points="948.4,468.3 949.5,468.6 949.5,479.1 948.4,478.8" fill="#d8dade"/>
<polyline points="929.6,477.0 950.5,482.4" fill="none" stroke="#c4c4c4" stroke-width="0.8"/>
<polyline points="929.6,458.0 950.5,463.4" fill="none" stroke="#4a3a3a" stroke-width="0.8"/>
<polygon points="952.7,464.9 974.0,470.4 974.0,487.9 952.7,482.4" fill="#f0f1f3"/>
<polygon points="952.7,465.4 953.9,465.7 953.9,481.7 952.7,481.4" fill="#a85058"/>
<polygon points="955.5,468.2 958.6,468.9 958.6,479.9 955.5,479.2" fill="#b4a4ac"/>
<polygon points="960.6,470.5 970.3,473.0 970.3,484.5 960.6,482.0" fill="#c6cace"/>
<polygon points="971.8,474.3 973.0,474.6 973.0,485.1 971.8,484.8" fill="#d8dade"/>
<polyline points="952.5,482.9 974.0,488.4" fill="none" stroke="#c4c4c4" stroke-width="0.8"/>
<polyline points="952.5,463.9 974.0,469.4" fill="none" stroke="#4a3a3a" stroke-width="0.8"/>
<polygon points="929.8,494.6 950.5,499.9 950.5,517.4 929.8,512.1" fill="#f0f1f3"/>
<polygon points="929.8,495.1 931.0,495.4 931.0,511.4 929.8,511.1" fill="#a85058"/>
<polygon points="932.6,497.8 935.6,498.5 935.6,509.5 932.6,508.8" fill="#b4a4ac"/>
<polygon points="937.6,500.0 946.9,502.4 946.9,513.9 937.6,511.5" fill="#c6cace"/>
<polygon points="948.4,503.8 949.5,504.1 949.5,514.6 948.4,514.3" fill="#d8dade"/>
<polyline points="929.6,512.5 950.5,517.9" fill="none" stroke="#c4c4c4" stroke-width="0.8"/>
<polyline points="929.6,493.5 950.5,498.9" fill="none" stroke="#4a3a3a" stroke-width="0.8"/>
<polygon points="952.7,500.4 974.0,505.9 974.0,523.4 952.7,517.9" fill="#f0f1f3"/>
<polygon points="952.7,500.9 953.9,501.2 953.9,517.2 952.7,516.9" fill="#a85058"/>
<polygon points="955.5,503.7 958.6,504.4 958.6,515.4 955.5,514.7" fill="#b4a4ac"/>
<polygon points="960.6,506.0 970.3,508.5 970.3,520.0 960.6,517.5" fill="#c6cace"/>
<polygon points="971.8,509.8 973.0,510.1 973.0,520.6 971.8,520.3" fill="#d8dade"/>
<polyline points="952.5,518.4 974.0,523.9" fill="none" stroke="#c4c4c4" stroke-width="0.8"/>
<polyline points="952.5,499.4 974.0,504.9" fill="none" stroke="#4a3a3a" stroke-width="0.8"/>
<polygon points="929.8,530.1 950.5,535.4 950.5,552.9 929.8,547.6" fill="#f0f1f3"/>
<polygon points="929.8,530.6 931.0,530.9 931.0,546.9 929.8,546.6" fill="#a85058"/>
<polygon points="932.6,533.3 935.6,534.0 935.6,545.0 932.6,544.3" fill="#b4a4ac"/>
<polygon points="937.6,535.5 946.9,537.9 946.9,549.4 937.6,547.0" fill="#c6cace"/>
<polygon points="948.4,539.3 949.5,539.6 949.5,550.1 948.4,549.8" fill="#d8dade"/>
<polyline points="929.6,548.0 950.5,553.4" fill="none" stroke="#c4c4c4" stroke-width="0.8"/>
<polyline points="929.6,529.0 950.5,534.4" fill="none" stroke="#4a3a3a" stroke-width="0.8"/>
<polygon points="952.7,535.9 974.0,541.4 974.0,558.9 952.7,553.4" fill="#f0f1f3"/>
<polygon points="952.7,536.4 953.9,536.7 953.9,552.7 952.7,552.4" fill="#a85058"/>
<polygon points="955.5,539.2 958.6,539.9 958.6,550.9 955.5,550.2" fill="#b4a4ac"/>
<polygon points="960.6,541.5 970.3,544.0 970.3,555.5 960.6,553.0" fill="#c6cace"/>
<polygon points="971.8,545.3 973.0,545.6 973.0,556.1 971.8,555.8" fill="#d8dade"/>
<polyline points="952.5,553.9 974.0,559.4" fill="none" stroke="#c4c4c4" stroke-width="0.8"/>
<polyline points="952.5,534.9 974.0,540.4" fill="none" stroke="#4a3a3a" stroke-width="0.8"/>
<polyline points="951.5,425.6 951.5,567.6" fill="none" stroke="#a08082" stroke-width="0.9"/>
<polyline points="918.6,452.2 985.0,469.2" fill="none" stroke="#f4eeee" stroke-width="0.7"/>
<polyline points="918.6,487.7 985.0,504.7" fill="none" stroke="#f4eeee" stroke-width="0.7"/>
<polyline points="918.6,523.2 985.0,540.2" fill="none" stroke="#f4eeee" stroke-width="0.7"/>
<polyline points="912.0,413.5 912.0,557.5" fill="none" stroke="#f2eaea" stroke-width="1"/>
<polyline points="916.0,414.5 916.0,558.5" fill="none" stroke="#f2eaea" stroke-width="1"/>
<polyline points="921.0,415.8 921.0,559.8" fill="none" stroke="#f2eaea" stroke-width="1"/>
<polyline points="925.0,416.8 925.0,560.8" fill="none" stroke="#f2eaea" stroke-width="1"/>
<polyline points="978.0,430.4 978.0,574.4" fill="none" stroke="#f2eaea" stroke-width="1"/>
<polyline points="982.0,431.5 982.0,575.5" fill="none" stroke="#f2eaea" stroke-width="1"/>
<polyline points="866.0,546.2 986.5,577.1" fill="none" stroke="#f0f0f0" stroke-width="0.9"/>
<polyline points="866.0,548.2 986.5,579.1" fill="none" stroke="#b8b8b8" stroke-width="0.5"/>
<polygon points="889.0,554.6 911.0,560.2 911.0,586.2 889.0,580.6" fill="#f6f6f6"/>
<polygon points="890.5,557.0 891.9,557.3 891.9,579.3 890.5,579.0" fill="#c6cace"/>
<polygon points="893.4,557.7 895.6,558.3 895.6,580.3 893.4,579.7" fill="#c6cace"/>
<polygon points="897.4,558.7 898.0,558.9 898.0,580.9 897.4,580.7" fill="#c6cace"/>
<polygon points="902.0,559.9 903.4,560.3 903.4,582.3 902.0,581.9" fill="#c6cace"/>
<polygon points="904.9,560.7 907.1,561.2 907.1,583.2 904.9,582.7" fill="#c6cace"/>
<polygon points="908.9,561.7 909.5,561.8 909.5,583.8 908.9,583.7" fill="#c6cace"/>
<polyline points="889.0,563.1 911.0,568.7" fill="none" stroke="#f6f6f6" stroke-width="1.0"/>
<polygon points="931.0,565.4 976.0,576.9 976.0,602.9 931.0,591.4" fill="#f6f6f6"/>
<polygon points="932.5,567.7 937.2,568.9 937.2,590.9 932.5,589.7" fill="#c6cace"/>
<polygon points="938.7,569.3 945.8,571.2 945.8,593.2 938.7,591.3" fill="#c6cace"/>
<polygon points="947.6,571.6 951.5,572.6 951.5,594.6 947.6,593.6" fill="#c6cace"/>
<polygon points="955.5,573.7 960.2,574.8 960.2,596.8 955.5,595.7" fill="#c6cace"/>
<polygon points="961.7,575.2 968.8,577.1 968.8,599.1 961.7,597.2" fill="#c6cace"/>
<polygon points="970.6,577.5 974.5,578.5 974.5,600.5 970.6,599.5" fill="#c6cace"/>
<polygon points="932.5,567.7 937.0,568.9 937.0,579.9 932.5,578.7" fill="#bf8486"/>
<polygon points="938.5,569.3 944.0,570.7 944.0,575.7 938.5,574.3" fill="#bf8486"/>
<polyline points="931.0,573.9 976.0,585.4" fill="none" stroke="#f6f6f6" stroke-width="1.0"/>
<polygon points="918.0,560.0 923.0,561.3 923.0,600.3 918.0,599.0" fill="#8a8a10"/>
<polyline points="918.0,560.0 918.0,599.0" fill="none" stroke="#e8e8a0" stroke-width="0.5"/>
<polyline points="923.0,561.3 923.0,600.3" fill="none" stroke="#e8e8a0" stroke-width="0.5"/>
<polyline points="866.0,580.2 986.5,611.1" fill="none" stroke="#d0c0c0" stroke-width="0.6"/>
<polygon points="984.0,577.0 986.5,577.6 986.5,616.6 984.0,616.0" fill="#bf8486"/>
<polygon points="858.0,583.0 866.0,580.0 985.5,610.8 985.5,616.0 989.3,624.4 973.0,618.7 860.0,589.5" fill="#e0e0e0"/>
<polyline points="986.5,420.6 986.5,616.6" fill="none" stroke="#f4f4f4" stroke-width="0.9"/>
<polygon points="634.7,544.8 647.0,533.5 647.4,543.4 673.6,550.2 680.6,544.5 712.0,552.0 712.0,558.5 684.0,552.0 676.0,557.0" fill="#dcdcdc"/>
<polygon points="795.0,574.0 824.2,582.0 824.2,588.6 850.8,595.6 858.0,589.5 866.0,583.5 867.0,589.3 853.6,601.7 817.6,592.5 795.0,581.0" fill="#dcdcdc"/>
<polygon points="707.0,554.3 784.8,574.8 765.4,598.8 684.3,577.1" fill="#e2e2e2"/>
<path d="M584.9 578.3 C600 565 625 553 660 551.5 C680 551 695 552 707 554.3 L684.3 577.1 C672 573 655 574 642 578.5 C634 581.5 628 585 624.8 588.6 Z" fill="#e0e0e0"/>
<path d="M784.8 577 C803 581 822 592 831 606 C836 615 834 628 824.8 640 L784.8 629.7 C790 622 790 614 785 607.5 C780 602 773 599 766.5 597.7 Z" fill="#dedede"/>
<polygon points="684.3,577.1 765.4,598.8 764.4,604.8 683.3,583.1" fill="#b8b8b8"/>
<polyline points="684.3,577.1 765.4,598.8" fill="none" stroke="#fcfcfc" stroke-width="1"/>
<polyline points="683.9,579.0 765.0,600.7" fill="none" stroke="#fcfcfc" stroke-width="1"/>
<polyline points="683.5,580.9 764.6,602.6" fill="none" stroke="#fcfcfc" stroke-width="1"/>
<polyline points="683.2,582.8 764.3,604.5" fill="none" stroke="#fcfcfc" stroke-width="1"/>
<polyline points="707.0,554.3 684.3,577.1" fill="none" stroke="#fafafa" stroke-width="0.7"/>
<polyline points="784.8,574.8 765.4,598.8" fill="none" stroke="#fafafa" stroke-width="0.7"/>
<path d="M684.3 577.5 C672 573.500 655 574.500 642 579" fill="none" stroke="#8a8a8a" stroke-width="1"/>
<path d="M766.5 598.5 C773 600 780 603 785 608" fill="none" stroke="#7a7a7a" stroke-width="1.200"/>
<!--OVERLAY-->
</svg>
</div>

<div class="abs" style="left:1257px;top:146px;width:12px;height:578px;background:#f2f2f2;border-left:1px solid #dcdcdc"></div>
<div class="t" style="left:1260px;top:150px;font-size:7px;color:#222">▲</div>
<div class="t" style="left:1260px;top:707px;font-size:7px;color:#222">▼</div>
<div class="abs" style="left:1258px;top:429px;width:11px;height:12px;background:linear-gradient(90deg,#f6f6f6,#d9d9d9);border:1px solid #9a9a9a;border-radius:2px"></div>
<div class="abs" style="left:1212px;top:159px;width:9px;height:3px;background:#e8e8e8"></div>
<div class="abs" style="left:1228px;top:157px;width:7px;height:7px;border:2px solid #e8e8e8;border-top-width:2px"></div>
<div class="abs" style="left:1230px;top:155px;width:7px;height:2px;background:#e8e8e8"></div>
<div class="abs" style="left:1236px;top:155px;width:2px;height:6px;background:#e8e8e8"></div>
<svg class="abs" style="left:1243px;top:155px" width="11" height="10"><path d="M1.500 1 l8 8 M9.500 1 l-8 8" stroke="#f0f0f0" stroke-width="2.200"/></svg>
<!-- viewcube -->
<svg class="abs" style="left:1120px;top:205px" width="135" height="105" viewBox="1120 205 135 105" font-family="'Liberation Sans','Noto Sans CJK SC',sans-serif" text-anchor="middle">
 <ellipse cx="1183.400" cy="271" rx="47.500" ry="23" fill="none" stroke="#4c4c4c" stroke-width="8.500"/>
 <polygon points="1156,231 1175.400,217.300 1210,224.500 1192,238.200" fill="#787878"/>
 <polygon points="1156,231 1192,238.200 1192,275.600 1156.700,265.500" fill="#6e6e6e"/>
 <polygon points="1192,238.200 1210,224.500 1209.300,254.700 1192,275.600" fill="#646464"/>
 <text x="1174" y="260" font-size="17" fill="#8e8e8e" transform="rotate(12 1174 254)">前</text>
 <text x="1185" y="231" font-size="9" fill="#8c8c8c" transform="rotate(10 1185 228)">上</text>
 <text x="1200.500" y="253" font-size="10" fill="#7a7a7a" transform="rotate(-35 1200 249)">右</text>
 <text x="1142" y="257" font-size="11" fill="#8a8a8a" transform="rotate(-28 1142 253)">西</text>
 <text x="1156" y="296" font-size="13" fill="#909090" transform="rotate(14 1156 291)">南</text>
 <text x="1229" y="282" font-size="12" fill="#8a8a8a" transform="rotate(-22 1229 278)">东</text>
</svg>
<!-- nav bar -->
<div class="abs" style="left:1227px;top:312px;width:28px;height:101px;background:#585858;border:1px solid #6e6e6e;border-radius:4px"></div>
<div class="abs" style="left:1230px;top:361px;width:22px;height:1px;background:#444;border-bottom:1px solid #6a6a6a"></div>
<svg class="abs" style="left:1227px;top:312px" width="28" height="101" viewBox="0 0 28 101">
 <path d="M5 24 q0 -8 8 -8 h5 q5 0 5 5 v5 q0 10 -9 10 q-9 0 -9 -9z" fill="#c4c4c4"/>
 <circle cx="14" cy="27" r="6.500" fill="#5a5a5a" stroke="#8a8a8a" stroke-width="1"/><circle cx="14" cy="27" r="4" fill="#b8b8b8"/>
 <path d="M9 56 h9 v6 l-3 3 h-6z" fill="#6aa84a"/><circle cx="18.500" cy="66" r="2.200" fill="#d8d8d8"/>
 <path d="M20 3 l4 4 M24 3 l-4 4" stroke="#d0d0d0" stroke-width="1"/>
 <path d="M20 94 h4 M20 96 h4 M20.500 98 l1.500 1.500 l1.500 -1.500" stroke="#d0d0d0" stroke-width="0.900" fill="none"/>
</svg>

<div id="browser" class="abs"></div>
<div class="abs" style="left:4px;top:154px;width:204px;height:18px;background:linear-gradient(#c3d4e6,#b4c8de)"></div>
<div class="t" style="left:7px;top:155px;font-weight:bold;color:#2a2a2a;letter-spacing:0.25px">项目浏览器 - 技师学院机电培训中...</div>
<svg class="abs" style="left:196px;top:157px" width="10" height="10"><path d="M1.500 1.500 l7 7 M8.500 1.500 l-7 7" stroke="#111" stroke-width="1.800"/></svg>
<div id="tree" class="abs">
<div class="abs" style="left:6px;top:14px;width:0;height:511px;border-left:1px dotted #9a9a9a"></div>
<div class="abs" style="left:25px;top:21px;width:0;height:504px;border-left:1px dotted #9a9a9a"></div>
<div class="abs" style="left:43px;top:53px;width:0;height:115px;border-left:1px dotted #9a9a9a"></div>
<div class="abs" style="left:43px;top:195px;width:0;height:27px;border-left:1px dotted #9a9a9a"></div>
<div class="abs" style="left:43px;top:248px;width:0;height:98px;border-left:1px dotted #9a9a9a"></div>
<div class="abs" style="left:43px;top:372px;width:0;height:62px;border-left:1px dotted #9a9a9a"></div>
<div class="abs" style="left:43px;top:461px;width:0;height:27px;border-left:1px dotted #9a9a9a"></div>
<div class="abs" style="left:11px;top:9px;width:7px;height:0;border-top:1px dotted #9a9a9a"></div>
<div class="abs" style="left:2px;top:5px;width:9px;height:9px;border:1px solid #8e8e8e;background:linear-gradient(135deg,#fff,#d9d9d9)"></div>
<div class="abs" style="left:4px;top:9px;width:5px;height:1px;background:#222"></div>
<div class="row" style="left:37px;top:2.0px;">视图 (全部)</div>
<div class="abs" style="left:30px;top:27px;width:8px;height:0;border-top:1px dotted #9a9a9a"></div>
<div class="abs" style="left:21px;top:23px;width:9px;height:9px;border:1px solid #8e8e8e;background:linear-gradient(135deg,#fff,#d9d9d9)"></div>
<div class="abs" style="left:23px;top:27px;width:5px;height:1px;background:#222"></div>
<div class="abs" style="left:25px;top:25px;width:1px;height:5px;background:#222"></div>
<div class="row" style="left:40px;top:19.7px;">结构平面</div>
<div class="abs" style="left:30px;top:44px;width:8px;height:0;border-top:1px dotted #9a9a9a"></div>
<div class="abs" style="left:21px;top:40px;width:9px;height:9px;border:1px solid #8e8e8e;background:linear-gradient(135deg,#fff,#d9d9d9)"></div>
<div class="abs" style="left:23px;top:44px;width:5px;height:1px;background:#222"></div>
<div class="row" style="left:40px;top:37.4px;">楼层平面</div>
<div class="abs" style="left:43px;top:62px;width:12px;height:0;border-top:1px dotted #9a9a9a"></div>
<div class="row" style="left:58px;top:55.2px;">1F</div>
<div class="abs" style="left:43px;top:80px;width:12px;height:0;border-top:1px dotted #9a9a9a"></div>
<div class="row" style="left:58px;top:72.9px;">2F</div>
<div class="abs" style="left:43px;top:98px;width:12px;height:0;border-top:1px dotted #9a9a9a"></div>
<div class="row" style="left:58px;top:90.6px;">3F</div>
<div class="abs" style="left:43px;top:115px;width:12px;height:0;border-top:1px dotted #9a9a9a"></div>
<div class="row" style="left:58px;top:108.3px;">4F</div>
<div class="abs" style="left:43px;top:133px;width:12px;height:0;border-top:1px dotted #9a9a9a"></div>
<div class="row" style="left:58px;top:126.0px;">5F</div>
<div class="abs" style="left:43px;top:151px;width:12px;height:0;border-top:1px dotted #9a9a9a"></div>
<div class="row" style="left:58px;top:143.8px;">室外地坪</div>
<div class="abs" style="left:43px;top:168px;width:12px;height:0;border-top:1px dotted #9a9a9a"></div>
<div class="abs" style="left:55px;top:160px;width:49px;height:17px;background:#e6e6e6"></div>
<div class="row" style="left:58px;top:161.5px;">屋面楼板</div>
<div class="abs" style="left:30px;top:186px;width:8px;height:0;border-top:1px dotted #9a9a9a"></div>
<div class="abs" style="left:21px;top:182px;width:9px;height:9px;border:1px solid #8e8e8e;background:linear-gradient(135deg,#fff,#d9d9d9)"></div>
<div class="abs" style="left:23px;top:186px;width:5px;height:1px;background:#222"></div>
<div class="row" style="left:40px;top:179.2px;">天花板平面</div>
<div class="abs" style="left:43px;top:204px;width:12px;height:0;border-top:1px dotted #9a9a9a"></div>
<div class="row" style="left:58px;top:196.9px;">1F</div>
<div class="abs" style="left:43px;top:222px;width:12px;height:0;border-top:1px dotted #9a9a9a"></div>
<div class="row" style="left:58px;top:214.6px;">2F</div>
<div class="abs" style="left:30px;top:239px;width:8px;height:0;border-top:1px dotted #9a9a9a"></div>
<div class="abs" style="left:21px;top:235px;width:9px;height:9px;border:1px solid #8e8e8e;background:linear-gradient(135deg,#fff,#d9d9d9)"></div>
<div class="abs" style="left:23px;top:239px;width:5px;height:1px;background:#222"></div>
<div class="row" style="left:40px;top:232.4px;">三维视图</div>
<div class="abs" style="left:43px;top:257px;width:12px;height:0;border-top:1px dotted #9a9a9a"></div>
<div class="row" style="left:58px;top:250.1px;font-weight:bold;">{三维 - 张洋}</div>
<div class="abs" style="left:43px;top:275px;width:12px;height:0;border-top:1px dotted #9a9a9a"></div>
<div class="row" style="left:58px;top:267.8px;">{三维 - 李枭}</div>
<div class="abs" style="left:43px;top:293px;width:12px;height:0;border-top:1px dotted #9a9a9a"></div>
<div class="row" style="left:58px;top:285.5px;">{三维 - 杨雨迪}</div>
<div class="abs" style="left:43px;top:310px;width:12px;height:0;border-top:1px dotted #9a9a9a"></div>
<div class="row" style="left:58px;top:303.2px;">{三维}</div>
<div class="abs" style="left:43px;top:328px;width:12px;height:0;border-top:1px dotted #9a9a9a"></div>
<div class="row" style="left:58px;top:321.0px;">三维模型</div>
<div class="abs" style="left:43px;top:346px;width:12px;height:0;border-top:1px dotted #9a9a9a"></div>
<div class="row" style="left:58px;top:338.7px;">三维视图 1</div>
<div class="abs" style="left:30px;top:363px;width:8px;height:0;border-top:1px dotted #9a9a9a"></div>
<div class="abs" style="left:21px;top:359px;width:9px;height:9px;border:1px solid #8e8e8e;background:linear-gradient(135deg,#fff,#d9d9d9)"></div>
<div class="abs" style="left:23px;top:363px;width:5px;height:1px;background:#222"></div>
<div class="row" style="left:40px;top:356.4px;">立面 (建筑立面)</div>
<div class="abs" style="left:43px;top:381px;width:12px;height:0;border-top:1px dotted #9a9a9a"></div>
<div class="row" style="left:58px;top:374.1px;">东</div>
<div class="abs" style="left:43px;top:399px;width:12px;height:0;border-top:1px dotted #9a9a9a"></div>
<div class="row" style="left:58px;top:391.8px;">北</div>
<div class="abs" style="left:43px;top:417px;width:12px;height:0;border-top:1px dotted #9a9a9a"></div>
<div class="row" style="left:58px;top:409.6px;">南</div>
<div class="abs" style="left:43px;top:434px;width:12px;height:0;border-top:1px dotted #9a9a9a"></div>
<div class="row" style="left:58px;top:427.3px;">西</div>
<div class="abs" style="left:30px;top:452px;width:8px;height:0;border-top:1px dotted #9a9a9a"></div>
<div class="abs" style="left:21px;top:448px;width:9px;height:9px;border:1px solid #8e8e8e;background:linear-gradient(135deg,#fff,#d9d9d9)"></div>
<div class="abs" style="left:23px;top:452px;width:5px;height:1px;background:#222"></div>
<div class="row" style="left:40px;top:445.0px;">面积平面 (人防分区面积)</div>
<div class="abs" style="left:43px;top:470px;width:12px;height:0;border-top:1px dotted #9a9a9a"></div>
<div class="row" style="left:58px;top:462.7px;">1F</div>
<div class="abs" style="left:43px;top:487px;width:12px;height:0;border-top:1px dotted #9a9a9a"></div>
<div class="row" style="left:58px;top:480.4px;">2F</div>
<div class="abs" style="left:30px;top:505px;width:8px;height:0;border-top:1px dotted #9a9a9a"></div>
<div class="abs" style="left:21px;top:501px;width:9px;height:9px;border:1px solid #8e8e8e;background:linear-gradient(135deg,#fff,#d9d9d9)"></div>
<div class="abs" style="left:23px;top:505px;width:5px;height:1px;background:#222"></div>
<div class="abs" style="left:25px;top:503px;width:1px;height:5px;background:#222"></div>
<div class="row" style="left:40px;top:498.2px;">面积平面 (净面积)</div>
<div class="abs" style="left:30px;top:523px;width:8px;height:0;border-top:1px dotted #9a9a9a"></div>
<div class="abs" style="left:21px;top:519px;width:9px;height:9px;border:1px solid #8e8e8e;background:linear-gradient(135deg,#fff,#d9d9d9)"></div>
<div class="abs" style="left:23px;top:523px;width:5px;height:1px;background:#222"></div>
<div class="abs" style="left:25px;top:521px;width:1px;height:5px;background:#222"></div>
<div class="row" style="left:40px;top:515.9px;">面积平面 (总建筑面积)</div>
<svg class="abs" style="left:17px;top:2px" width="16" height="15" viewBox="0 0 16 15" fill="none" stroke="#333"><path d="M1.500 4 v-2.500 h2.500 M12 1.500 h2.500 v2.500 M14.500 11 v2.500 h-2.500 M4 13.500 h-2.500 v-2.500" stroke-dasharray="1.500 1"/><rect x="4.500" y="4" width="7" height="7" rx="2" stroke="#222" stroke-width="1.200"/></svg>
<div class="abs" style="left:182px;top:0;width:14px;height:522px;background:#f0f0f0;border-left:1px solid #e2e2e2"></div>
<div class="abs" style="left:183px;top:15px;width:12px;height:367px;background:linear-gradient(90deg,#f4f4f4,#dcdcdc);border:1px solid #9c9c9c;border-radius:2px"></div>
<div class="abs" style="left:186px;top:196px;width:6px;height:1px;background:#555;box-shadow:0 2px 0 #555,0 4px 0 #555"></div>
<div class="t" style="left:185px;top:2px;font-size:7px;color:#444">▲</div>
<div class="t" style="left:185px;top:509px;font-size:7px;color:#444">▼</div>
</div>
<div class="abs" style="left:6px;top:699px;width:34px;height:21px;background:#e4e4e4;border:1px solid #8e8e8e;border-top:none;border-radius:0 0 3px 3px"></div>
<div class="t" style="left:13px;top:703px">属性</div>
<div class="abs" style="left:40px;top:699px;width:166px;height:20px;background:#f8f8f8;border:1px solid #8e8e8e;border-top:none;border-radius:0 0 3px 3px"></div>
<div class="t" style="left:46px;top:703px">项目浏览器 - 技师学院机电培训...</div>
<div id="vcb" class="abs"></div>
<div class="t" style="left:17px;top:724px;word-spacing:2px">1 : 100</div>
<svg class="abs" style="left:66px;top:723px" width="270" height="17" viewBox="66 0 270 17" fill="none" stroke-width="1.200">
 <rect x="68.500" y="3.500" width="13" height="10" fill="#fff" stroke="#333"/><path d="M70 6 h10 M70 8.500 h10 M70 11 h10" stroke="#555" stroke-dasharray="1.500 1"/>
 <path d="M88 7 l3 -3 h11 v7 l-3 3 h-11z M88 7 h11 v7 M99 7 l3 -3" fill="#9fc4ee" stroke="#1c4f9c"/>
 <circle cx="111" cy="7.500" r="3.500" fill="#f8c838" stroke="#b07808"/><path d="M114 10 l5 5 M119 10 l-5 5" stroke="#d02020" stroke-width="1.600"/>
 <path d="M128 12 a4 4 0 1 1 4 -6" stroke="#1c4f9c"/><path d="M132 9 l5 5 M137 9 l-5 5" stroke="#d02020" stroke-width="1.600"/>
 <path d="M145 7 l4 -3 l5 1 l2 4 l-4 2 l-5 -1z" fill="#dbe7f5" stroke="#35609c"/><circle cx="156" cy="12" r="2.500" stroke="#35609c"/>
 <path d="M162 9 h5 M165 5 v8 M171 7 h7 v6 h-7z" stroke="#1c4f9c"/><path d="M168 9 l6 6 M174 9 l-6 6" stroke="#d02020" stroke-width="1.600"/>
 <path d="M184 9 h4 M186 6 v7 M189 6 h7 v5 h-7z" stroke="#1c4f9c"/><circle cx="196" cy="11" r="3" stroke="#35609c" fill="#e8f0fa"/>
 <path d="M206 7 l4 -3 l4 3 v6 h-8z" stroke="#444" fill="#e8e8e8"/><path d="M212 9 a3 3 0 1 1 -1 5" stroke="#2a8a2a"/>
 <path d="M224 10 q3 -5 6 0 q3 5 6 0" stroke="#444"/><circle cx="230" cy="10" r="1.500" fill="#444"/>
 <circle cx="247" cy="8" r="2.800" stroke="#2a70d0"/><path d="M247 11 v3" stroke="#2a70d0"/>
 <circle cx="262" cy="8" r="3.200" stroke="#3a7a3a" fill="#cfe8cf"/><circle cx="267" cy="8" r="3.200" stroke="#3a7a3a"/><path d="M263 10 l5 5 M268 10 l-5 5" stroke="#d02020" stroke-width="1.600"/>
 <rect x="278.500" y="4.500" width="11" height="9" stroke="#333" stroke-dasharray="2 1"/><circle cx="288" cy="11" r="2.500" fill="#eee" stroke="#333"/>
 <path d="M297 7 l3 -3 h9 v7 l-3 3 h-9z M297 7 h9 v7 M306 7 l3 -3" stroke="#444" fill="#ddd"/><path d="M299 9 h5 M299 11 h5" stroke="#c04040"/>
 <path d="M315 7 l3 -3 h8 v7 l-3 3 h-8z M315 7 h8 v7 M323 7 l3 -3" stroke="#444" fill="#eee"/><path d="M318 10 h8 v5 h-8z" fill="#ccc" stroke="#444"/>
</svg>
<!-- hscroll -->
<div class="abs" style="left:330px;top:724px;width:927px;height:18px;background:#f2f2f2"></div>
<div class="t" style="left:332px;top:726px;font-size:7px;color:#222">◀</div>
<div class="t" style="left:1245px;top:726px;font-size:7px;color:#222">▶</div>
<div class="abs" style="left:785px;top:725px;width:14px;height:15px;background:linear-gradient(#f6f6f6,#d9d9d9);border:1px solid #9a9a9a;border-radius:2px"></div>
<div class="abs" style="left:1257px;top:724px;width:12px;height:18px;background:#ececec"></div>
<div class="abs" style="left:1262px;top:728px;width:1px;height:1px;background:#888;box-shadow:2px 2px 0 #888,0 4px 0 #888,2px 6px 0 #888,0 8px 0 #888"></div>

<div id="status" class="abs"></div>
<div class="t" style="left:-1px;top:745px;width:488px;overflow:hidden;letter-spacing:0.100px">单击可进行选择; 按 Tab 键并单击可选择其他项目; 按 Ctrl 键并单击可将新项目添加到选择集; 按 Shift 键</div>
<svg class="abs" style="left:490px;top:742px" width="20" height="20" viewBox="0 0 20 20"><path d="M3 9 l3.500 -2 l3.500 2 v7 l-3.500 2 l-3.500 -2z" fill="#cfe0f2" stroke="#2f5f96"/><path d="M9 5 l3 -2 l3 2 v5 l-3 2 l-3 -2z" fill="#58b858" stroke="#2a7a2a"/><path d="M12 11 q0 -2 2 -2 v2 h2 v-2 q2 0 2 2 q0 2 -1.500 2 v5 h-3 v-5 q-1.500 0 -1.500 -2z" fill="#f4f4f4" stroke="#444"/></svg>
<div class="abs" style="left:511px;top:742px;width:187px;height:20px;background:#fff;border:1px solid #d0d0d0"></div>
<div class="t" style="left:517px;top:745px">设备</div>
<div class="t" style="left:685px;top:748px;font-size:7px;color:#111">▼</div>
<svg class="abs" style="left:702px;top:742px" width="18" height="20" viewBox="0 0 18 20" fill="none" stroke="#333" stroke-width="1.200"><path d="M5 4 h8 v5 h-5 l-2 4"/><circle cx="5" cy="15" r="2.500"/><path d="M10 16 h5"/></svg>
<div class="t" style="left:721px;top:745px">:0</div>
<div class="abs" style="left:750px;top:744px;width:16px;height:15px;background:#f4f4f4;border:1px solid #555"></div>
<div class="abs" style="left:753px;top:747px;width:10px;height:2px;background:#555;box-shadow:0 4px 0 #777,0 7px 0 #777"></div>
<div class="abs" style="left:770px;top:744px;width:17px;height:15px;background:#b8b8b8;border:1px solid #999"></div>
<div class="abs" style="left:793px;top:742px;width:138px;height:20px;background:#f4f4f4;border:1px solid #d4d4d4"></div>
<div class="t" style="left:797px;top:745px;color:#8a8a8a">主模型</div>
<div class="t" style="left:920px;top:748px;font-size:7px;color:#9a9a9a">▼</div>
<div class="abs" style="left:1003px;top:745px;width:13px;height:13px;background:#fff;border:1px solid #555"></div>
<div class="t" style="left:1018px;top:745px">仅可编辑项</div>
<svg class="abs" style="left:1076px;top:741px" width="145" height="22" viewBox="1076 0 145 22" fill="none" stroke-width="1.200">
 <path d="M1079 6 l4 -2 h8 l2 3 l-3 3 h-8z" fill="#f4c84a" stroke="#9a6a08"/><path d="M1086 9 v9 l2.500 -2.500 l2 4 l1.500 -1 l-2 -4 h3.500z" fill="#fff" stroke="#222" stroke-width="0.900"/>
 <path d="M1101 12 l6 -6 h7 l-6 6z M1101 12 h7 M1103 15 h8" stroke="#2a62b4"/><path d="M1109 10 v9 l2.500 -2.500 l2 4 l1.500 -1 l-2 -4 h3.500z" fill="#fff" stroke="#222" stroke-width="0.900"/>
 <path d="M1126 5 h9 l-2 4 l2 4 h-9z" fill="#f4c84a" stroke="#9a6a08"/><path d="M1133 4 l6 6 M1139 4 l-6 6" stroke="#d02020" stroke-width="1.600"/><path d="M1130 10 v9 l2.500 -2.500 l2 4 l1.500 -1 l-2 -4 h3.500z" fill="#fff" stroke="#222" stroke-width="0.900"/>
 <path d="M1149 7 l4 -3 v12 l-4 3z" fill="#cfe0f2" stroke="#2a62b4"/><path d="M1155 4 l6 6 M1161 4 l-6 6" stroke="#d02020" stroke-width="1.600"/><path d="M1154 10 v9 l2.500 -2.500 l2 4 l1.500 -1 l-2 -4 h3.500z" fill="#fff" stroke="#222" stroke-width="0.900"/>
 <path d="M1172 8 h8 M1176 4 v8 M1172 8 l2 -1.500 v3z M1180 8 l-2 -1.500 v3z M1176 4 l-1.500 2 h3z M1176 12 l-1.500 -2 h3z" stroke="#222" stroke-width="1"/><path d="M1179 10 v9 l2.500 -2.500 l2 4 l1.500 -1 l-2 -4 h3.500z" fill="#fff" stroke="#222" stroke-width="0.900"/>
 <path d="M1192 5 h13 l-5 6 v7 l-3 -2 v-5z" fill="#e8e8e8" stroke="#333"/>
</svg>
<div class="t" style="left:1206px;top:746px">:0</div>

</body>
</html>
